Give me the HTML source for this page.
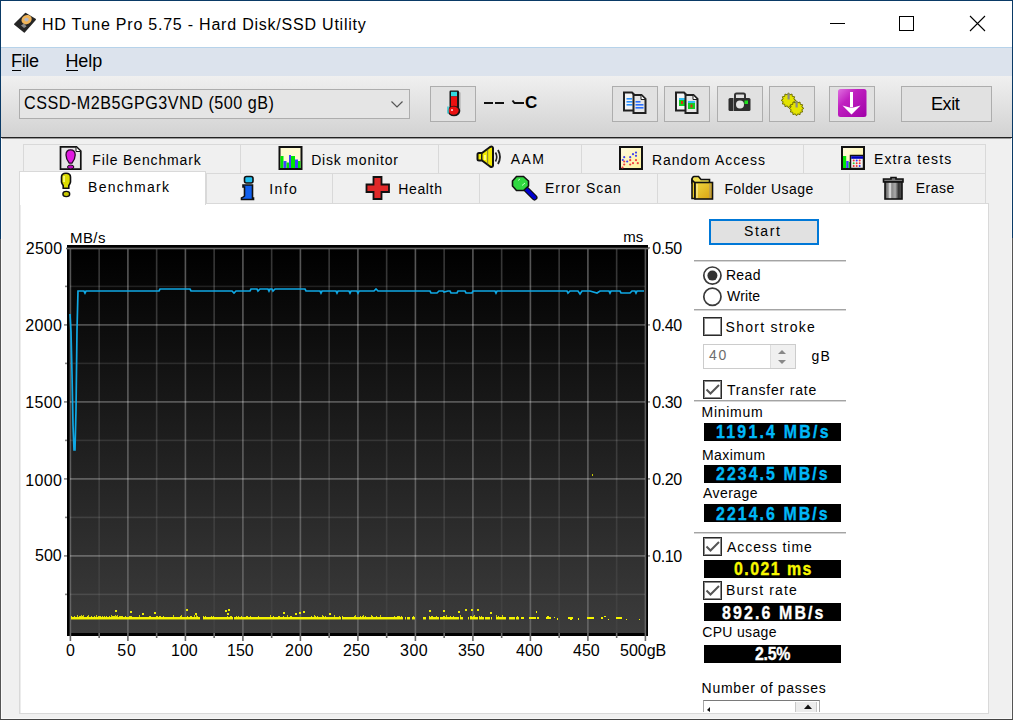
<!DOCTYPE html>
<html><head><meta charset="utf-8">
<style>
*{margin:0;padding:0;box-sizing:border-box}
html,body{width:1013px;height:720px;overflow:hidden;background:#f0f0f0;font-family:"Liberation Sans",sans-serif;color:#000}
.a{position:absolute}
.t{position:absolute;white-space:nowrap;line-height:1}
#titlebar{left:0;top:0;width:1013px;height:47px;background:#fff}
#menubar{left:0;top:47px;width:1013px;height:29px;background:#dce3ed;border-top:1px solid #b7d3ea}
#toolbar{left:0;top:76px;width:1013px;height:61px;background:linear-gradient(#f0f0f0,#d2d2d2)}
#tbline{left:0;top:137px;width:1012px;height:2px;background:linear-gradient(#222 50%,#9a9a9a 50%)}
.btn{position:absolute;background:#e1e1e1;border:1px solid #adadad}
.tab{position:absolute;background:#f0f0f0;border:1px solid #d9d9d9;border-bottom:none}
.tabsel{position:absolute;background:#fff;border:1px solid #d9d9d9;border-bottom:none}
#panel{left:19px;top:203px;width:970px;height:511px;background:#fff;border:1px solid #d9d9d9;box-shadow:inset 1px 0 0 #ececec}
.sep{position:absolute;height:2px;background:linear-gradient(#a4a4a4 50%,#d6d6d6 50%);left:694px;width:152px}
.val{position:absolute;background:#000;left:704px;width:137px;height:18px}
.chk{position:absolute;width:19px;height:19px;border:1px solid #2a2a2a;box-shadow:inset 0 0 0 1px rgba(0,0,0,0.45);background:#fff}
</style></head>
<body>
<div class="a" id="titlebar"></div>
<div class="a" id="menubar"></div>
<div class="a" id="toolbar"></div>
<div class="a" id="tbline"></div>
<!-- window border -->
<div class="a" style="left:0;top:0;width:1013px;height:1px;background:#0a3a66"></div>
<div class="a" style="left:0;top:0;width:1px;height:239px;background:#0a3a66"></div>
<div class="a" style="left:0;top:239px;width:1px;height:481px;background:#555"></div>
<div class="a" style="left:1012px;top:0;width:1px;height:238px;background:#0a3a66"></div>
<div class="a" style="left:1012px;top:238px;width:1px;height:482px;background:#555"></div>
<div class="a" style="left:0;top:719px;width:1013px;height:1px;background:#444"></div>
<div class="a" style="left:1px;top:138px;width:1px;height:581px;background:#fafafa"></div>
<div class="a" style="left:1011px;top:138px;width:1px;height:581px;background:#f8f8f8"></div>
<div class="a" style="left:1px;top:718px;width:1011px;height:1px;background:#f8f8f8"></div>

<!-- title -->
<div class="t" id="ttl" style="left:42.0px;top:17.2px;font-size:16px;letter-spacing:0.78px">HD Tune Pro 5.75 - Hard Disk/SSD Utility</div>
<!-- menu -->
<div class="t" id="mfile" style="left:11.0px;top:52.2px;font-size:18px;letter-spacing:-0.34px">File</div>
<div class="t" id="mhelp" style="left:65.4px;top:52.4px;font-size:18px;letter-spacing:-0.07px">Help</div>

<!-- toolbar -->
<div class="btn" style="left:19px;top:89px;width:391px;height:30px;background:#e5e5e5"></div>
<div class="t" id="combo" style="left:23.8px;top:93.3px;font-size:19px;transform:scaleX(0.85);transform-origin:0 0;letter-spacing:0.59px">CSSD-M2B5GPG3VND (500 gB)</div>
<div class="btn" style="left:430px;top:86px;width:46px;height:36px"></div>
<div class="t" id="tempc" style="left:525px;top:94.0px;font-size:17px;font-weight:bold">C</div>
<div class="a" style="left:484px;top:102px;width:9px;height:2px;background:#111"></div>
<div class="a" style="left:495px;top:102px;width:9px;height:2px;background:#111"></div>
<svg class="a" style="left:510px;top:98px" width="16" height="8"><path d="M2.5,2.5 L4.5,5 H14" fill="none" stroke="#111" stroke-width="2"/></svg>
<div class="btn" style="left:612px;top:86px;width:46px;height:36px"></div>
<div class="btn" style="left:664px;top:86px;width:46px;height:36px"></div>
<div class="btn" style="left:717px;top:86px;width:46px;height:36px"></div>
<div class="btn" style="left:769px;top:86px;width:46px;height:36px"></div>
<div class="btn" style="left:829px;top:86px;width:46px;height:36px"></div>
<div class="btn" style="left:901px;top:86px;width:91px;height:36px"></div>
<div class="t" id="exit" style="left:930.9px;top:94.7px;font-size:18px;letter-spacing:-0.37px">Exit</div>


<!-- tabs back row -->
<div class="tab" style="left:23px;top:144px;width:218px;height:30px"></div>
<div class="tab" style="left:240px;top:144px;width:199px;height:30px"></div>
<div class="tab" style="left:438px;top:144px;width:144px;height:30px"></div>
<div class="tab" style="left:581px;top:144px;width:223px;height:30px"></div>
<div class="tab" style="left:803px;top:144px;width:183px;height:30px"></div>
<div class="t" id="tb_fb" style="left:92.3px;top:152.9px;font-size:14px;letter-spacing:0.86px">File Benchmark</div>
<div class="t" id="tb_dm" style="left:311.2px;top:152.8px;font-size:14px;letter-spacing:0.81px">Disk monitor</div>
<div class="t" id="tb_aam" style="left:510.8px;top:152px;font-size:14px;letter-spacing:1.35px">AAM</div>
<div class="t" id="tb_ra" style="left:651.9px;top:152.9px;font-size:14px;letter-spacing:1.0px">Random Access</div>
<div class="t" id="tb_et" style="left:874.0px;top:152px;font-size:14px;letter-spacing:1.1px">Extra tests</div>
<!-- tabs front row -->
<div class="tab" style="left:206px;top:173px;width:127px;height:31px"></div>
<div class="tab" style="left:332px;top:173px;width:148px;height:31px"></div>
<div class="tab" style="left:479px;top:173px;width:179px;height:31px"></div>
<div class="tab" style="left:657px;top:173px;width:193px;height:31px"></div>
<div class="tab" style="left:849px;top:173px;width:137px;height:31px"></div>
<div class="t" id="tb_in" style="left:269.2px;top:182.4px;font-size:14px;letter-spacing:1.44px">Info</div>
<div class="t" id="tb_he" style="left:398.2px;top:182.4px;font-size:14px;letter-spacing:0.66px">Health</div>
<div class="t" id="tb_es" style="left:545.0px;top:181.4px;font-size:14px;letter-spacing:1.0px">Error Scan</div>
<div class="t" id="tb_fu" style="left:724.4px;top:182.4px;font-size:14px;letter-spacing:0.43px">Folder Usage</div>
<div class="t" id="tb_er" style="left:915.8px;top:181.4px;font-size:14px;letter-spacing:0.48px">Erase</div>
<!-- panel -->
<div class="a" id="panel"></div>

<div class="tabsel" style="left:19px;top:171px;width:187px;height:34px"></div>
<div class="t" id="tb_bm" style="left:88.1px;top:179.6px;font-size:14px;letter-spacing:1.25px">Benchmark</div>
<svg class="a" style="left:60px;top:236px" width="600" height="410" viewBox="0 0 600 410" shape-rendering="crispEdges">
<defs><linearGradient id="bg" x1="0" y1="0" x2="0" y2="1"><stop offset="0" stop-color="#000"/><stop offset="1" stop-color="#3c3c3c"/></linearGradient><linearGradient id="gmaj" x1="0" y1="0" x2="0" y2="1"><stop offset="0" stop-color="#555"/><stop offset="1" stop-color="#656565"/></linearGradient><linearGradient id="gmin" x1="0" y1="0" x2="0" y2="1"><stop offset="0" stop-color="#363636"/><stop offset="1" stop-color="#424242"/></linearGradient></defs>
<rect x="7" y="9" width="581" height="391" fill="#000"/>
<rect x="10" y="12" width="575" height="385" fill="url(#bg)"/>
<rect x="9.6" y="12" width="1.6" height="385" fill="url(#gmaj)" shape-rendering="auto"/>
<rect x="9.6" y="397" width="1.6" height="8" fill="#6a6a6a" shape-rendering="auto"/>
<rect x="38.35" y="12" width="1.6" height="385" fill="url(#gmin)" shape-rendering="auto"/>
<rect x="38.35" y="397" width="1.6" height="5" fill="#6a6a6a" shape-rendering="auto"/>
<rect x="67.1" y="12" width="1.6" height="385" fill="url(#gmaj)" shape-rendering="auto"/>
<rect x="67.1" y="397" width="1.6" height="8" fill="#6a6a6a" shape-rendering="auto"/>
<rect x="95.85" y="12" width="1.6" height="385" fill="url(#gmin)" shape-rendering="auto"/>
<rect x="95.85" y="397" width="1.6" height="5" fill="#6a6a6a" shape-rendering="auto"/>
<rect x="124.6" y="12" width="1.6" height="385" fill="url(#gmaj)" shape-rendering="auto"/>
<rect x="124.6" y="397" width="1.6" height="8" fill="#6a6a6a" shape-rendering="auto"/>
<rect x="153.35" y="12" width="1.6" height="385" fill="url(#gmin)" shape-rendering="auto"/>
<rect x="153.35" y="397" width="1.6" height="5" fill="#6a6a6a" shape-rendering="auto"/>
<rect x="182.1" y="12" width="1.6" height="385" fill="url(#gmaj)" shape-rendering="auto"/>
<rect x="182.1" y="397" width="1.6" height="8" fill="#6a6a6a" shape-rendering="auto"/>
<rect x="210.85" y="12" width="1.6" height="385" fill="url(#gmin)" shape-rendering="auto"/>
<rect x="210.85" y="397" width="1.6" height="5" fill="#6a6a6a" shape-rendering="auto"/>
<rect x="239.6" y="12" width="1.6" height="385" fill="url(#gmaj)" shape-rendering="auto"/>
<rect x="239.6" y="397" width="1.6" height="8" fill="#6a6a6a" shape-rendering="auto"/>
<rect x="268.35" y="12" width="1.6" height="385" fill="url(#gmin)" shape-rendering="auto"/>
<rect x="268.35" y="397" width="1.6" height="5" fill="#6a6a6a" shape-rendering="auto"/>
<rect x="297.1" y="12" width="1.6" height="385" fill="url(#gmaj)" shape-rendering="auto"/>
<rect x="297.1" y="397" width="1.6" height="8" fill="#6a6a6a" shape-rendering="auto"/>
<rect x="325.85" y="12" width="1.6" height="385" fill="url(#gmin)" shape-rendering="auto"/>
<rect x="325.85" y="397" width="1.6" height="5" fill="#6a6a6a" shape-rendering="auto"/>
<rect x="354.6" y="12" width="1.6" height="385" fill="url(#gmaj)" shape-rendering="auto"/>
<rect x="354.6" y="397" width="1.6" height="8" fill="#6a6a6a" shape-rendering="auto"/>
<rect x="383.35" y="12" width="1.6" height="385" fill="url(#gmin)" shape-rendering="auto"/>
<rect x="383.35" y="397" width="1.6" height="5" fill="#6a6a6a" shape-rendering="auto"/>
<rect x="412.1" y="12" width="1.6" height="385" fill="url(#gmaj)" shape-rendering="auto"/>
<rect x="412.1" y="397" width="1.6" height="8" fill="#6a6a6a" shape-rendering="auto"/>
<rect x="440.85" y="12" width="1.6" height="385" fill="url(#gmin)" shape-rendering="auto"/>
<rect x="440.85" y="397" width="1.6" height="5" fill="#6a6a6a" shape-rendering="auto"/>
<rect x="469.6" y="12" width="1.6" height="385" fill="url(#gmaj)" shape-rendering="auto"/>
<rect x="469.6" y="397" width="1.6" height="8" fill="#6a6a6a" shape-rendering="auto"/>
<rect x="498.35" y="12" width="1.6" height="385" fill="url(#gmin)" shape-rendering="auto"/>
<rect x="498.35" y="397" width="1.6" height="5" fill="#6a6a6a" shape-rendering="auto"/>
<rect x="527.1" y="12" width="1.6" height="385" fill="url(#gmaj)" shape-rendering="auto"/>
<rect x="527.1" y="397" width="1.6" height="8" fill="#6a6a6a" shape-rendering="auto"/>
<rect x="555.85" y="12" width="1.6" height="385" fill="url(#gmin)" shape-rendering="auto"/>
<rect x="555.85" y="397" width="1.6" height="5" fill="#6a6a6a" shape-rendering="auto"/>
<rect x="584.6" y="12" width="1.6" height="385" fill="url(#gmaj)" shape-rendering="auto"/>
<rect x="584.6" y="397" width="1.6" height="8" fill="#6a6a6a" shape-rendering="auto"/>
<rect x="6" y="11.7" width="583" height="1.6" fill="#6a6a6a" shape-rendering="auto"/>
<rect x="588" y="11.1" width="2" height="1.6" fill="#888" shape-rendering="auto"/>
<rect x="10" y="49.6" width="575" height="1.6" fill="#fff" opacity="0.11" shape-rendering="auto"/>
<rect x="5" y="49.6" width="2" height="1.6" fill="#888" shape-rendering="auto"/>
<rect x="10" y="88.1" width="575" height="1.6" fill="#fff" opacity="0.3" shape-rendering="auto"/>
<rect x="4" y="88.1" width="3" height="1.6" fill="#888" shape-rendering="auto"/>
<rect x="588" y="88.1" width="2" height="1.6" fill="#888" shape-rendering="auto"/>
<rect x="10" y="126.6" width="575" height="1.6" fill="#fff" opacity="0.11" shape-rendering="auto"/>
<rect x="5" y="126.6" width="2" height="1.6" fill="#888" shape-rendering="auto"/>
<rect x="10" y="165.1" width="575" height="1.6" fill="#fff" opacity="0.3" shape-rendering="auto"/>
<rect x="4" y="165.1" width="3" height="1.6" fill="#888" shape-rendering="auto"/>
<rect x="588" y="165.1" width="2" height="1.6" fill="#888" shape-rendering="auto"/>
<rect x="10" y="203.6" width="575" height="1.6" fill="#fff" opacity="0.11" shape-rendering="auto"/>
<rect x="5" y="203.6" width="2" height="1.6" fill="#888" shape-rendering="auto"/>
<rect x="10" y="242.1" width="575" height="1.6" fill="#fff" opacity="0.3" shape-rendering="auto"/>
<rect x="4" y="242.1" width="3" height="1.6" fill="#888" shape-rendering="auto"/>
<rect x="588" y="242.1" width="2" height="1.6" fill="#888" shape-rendering="auto"/>
<rect x="10" y="280.6" width="575" height="1.6" fill="#fff" opacity="0.11" shape-rendering="auto"/>
<rect x="5" y="280.6" width="2" height="1.6" fill="#888" shape-rendering="auto"/>
<rect x="10" y="319.1" width="575" height="1.6" fill="#fff" opacity="0.3" shape-rendering="auto"/>
<rect x="4" y="319.1" width="3" height="1.6" fill="#888" shape-rendering="auto"/>
<rect x="588" y="319.1" width="2" height="1.6" fill="#888" shape-rendering="auto"/>
<rect x="10" y="357.6" width="575" height="1.6" fill="#fff" opacity="0.11" shape-rendering="auto"/>
<rect x="5" y="357.6" width="2" height="1.6" fill="#888" shape-rendering="auto"/>
<path d="M10,78 L11,96 L12,138 L13,189 L14,214 L15,214 L16,174 L17,94 L18,55 L24,55 L25,57 L26,55 L99,55 L100,53 L130,53 L131,55 L172,55 L174,57 L176,55 L190,55 L191,53 L197,53 L198,55 L200,53 L208,53 L209,55 L210,53 L212,53 L213,55 L215,53 L245,53 L246,55 L260,55 L261,57 L262,55 L276,55 L277,57 L278,55 L289,55 L290,57 L291,55 L297,55 L298,57 L299,55 L314,55 L316,53 L318,55 L370,55 L371,57 L377,57 L379,55 L383,55 L384,56 L388,55 L390,55 L391,57 L397,57 L398,55 L405,55 L406,57 L412,57 L413,55 L435,55 L436,57 L437,55 L507,55 L508,57 L510,55 L518,55 L520,58 L522,55 L530,55 L537,57 L540,55 L549,55 L550,57 L551,55 L560,55 L561,57 L570,57 L572,55 L575,55 L576,57 L577,55 L584,55" fill="none" stroke="#10a8e4" stroke-width="1.7" shape-rendering="auto" stroke-linejoin="miter"/>
<rect x="11" y="381" width="1" height="2" fill="#f4f400" opacity="1"/>
<rect x="11" y="383" width="1" height="1" fill="#f4f400" opacity="0.45"/>
<rect x="11" y="380" width="1" height="1" fill="#f4f400" opacity="0.9"/>
<rect x="12" y="381" width="1" height="2" fill="#f4f400" opacity="1"/>
<rect x="12" y="383" width="1" height="1" fill="#f4f400" opacity="0.45"/>
<rect x="13" y="381" width="1" height="2" fill="#f4f400" opacity="1"/>
<rect x="13" y="383" width="1" height="1" fill="#f4f400" opacity="0.45"/>
<rect x="14" y="381" width="1" height="2" fill="#f4f400" opacity="1"/>
<rect x="14" y="383" width="1" height="1" fill="#f4f400" opacity="0.45"/>
<rect x="14" y="380" width="1" height="1" fill="#f4f400" opacity="0.9"/>
<rect x="15" y="381" width="1" height="2" fill="#f4f400" opacity="1"/>
<rect x="15" y="383" width="1" height="1" fill="#f4f400" opacity="0.45"/>
<rect x="16" y="381" width="1" height="2" fill="#f4f400" opacity="1"/>
<rect x="16" y="383" width="1" height="1" fill="#f4f400" opacity="0.45"/>
<rect x="17" y="381" width="1" height="2" fill="#f4f400" opacity="1"/>
<rect x="17" y="383" width="1" height="1" fill="#f4f400" opacity="0.45"/>
<rect x="17" y="379" width="1" height="2" fill="#f4f400" opacity="0.8"/>
<rect x="18" y="381" width="1" height="2" fill="#f4f400" opacity="1"/>
<rect x="18" y="383" width="1" height="1" fill="#f4f400" opacity="0.45"/>
<rect x="19" y="381" width="1" height="2" fill="#f4f400" opacity="1"/>
<rect x="19" y="383" width="1" height="1" fill="#f4f400" opacity="0.45"/>
<rect x="19" y="380" width="1" height="1" fill="#f4f400" opacity="0.9"/>
<rect x="20" y="381" width="1" height="2" fill="#f4f400" opacity="1"/>
<rect x="20" y="383" width="1" height="1" fill="#f4f400" opacity="0.45"/>
<rect x="20" y="380" width="1" height="1" fill="#f4f400" opacity="0.9"/>
<rect x="21" y="381" width="1" height="2" fill="#f4f400" opacity="1"/>
<rect x="21" y="383" width="1" height="1" fill="#f4f400" opacity="0.45"/>
<rect x="21" y="379" width="1" height="2" fill="#f4f400" opacity="0.8"/>
<rect x="22" y="381" width="1" height="2" fill="#f4f400" opacity="1"/>
<rect x="22" y="383" width="1" height="1" fill="#f4f400" opacity="0.45"/>
<rect x="22" y="380" width="1" height="1" fill="#f4f400" opacity="0.9"/>
<rect x="23" y="381" width="1" height="2" fill="#f4f400" opacity="1"/>
<rect x="23" y="383" width="1" height="1" fill="#f4f400" opacity="0.45"/>
<rect x="23" y="379" width="1" height="2" fill="#f4f400" opacity="0.8"/>
<rect x="24" y="381" width="1" height="2" fill="#f4f400" opacity="1"/>
<rect x="24" y="383" width="1" height="1" fill="#f4f400" opacity="0.45"/>
<rect x="25" y="381" width="1" height="2" fill="#f4f400" opacity="1"/>
<rect x="25" y="383" width="1" height="1" fill="#f4f400" opacity="0.45"/>
<rect x="26" y="381" width="1" height="2" fill="#f4f400" opacity="1"/>
<rect x="26" y="383" width="1" height="1" fill="#f4f400" opacity="0.45"/>
<rect x="27" y="381" width="1" height="2" fill="#f4f400" opacity="1"/>
<rect x="27" y="383" width="1" height="1" fill="#f4f400" opacity="0.45"/>
<rect x="27" y="380" width="1" height="1" fill="#f4f400" opacity="0.9"/>
<rect x="28" y="381" width="1" height="2" fill="#f4f400" opacity="1"/>
<rect x="28" y="383" width="1" height="1" fill="#f4f400" opacity="0.45"/>
<rect x="28" y="379" width="1" height="2" fill="#f4f400" opacity="0.8"/>
<rect x="29" y="381" width="1" height="2" fill="#f4f400" opacity="1"/>
<rect x="29" y="383" width="1" height="1" fill="#f4f400" opacity="0.45"/>
<rect x="30" y="381" width="1" height="2" fill="#f4f400" opacity="1"/>
<rect x="30" y="383" width="1" height="1" fill="#f4f400" opacity="0.45"/>
<rect x="31" y="381" width="1" height="2" fill="#f4f400" opacity="1"/>
<rect x="31" y="383" width="1" height="1" fill="#f4f400" opacity="0.45"/>
<rect x="31" y="380" width="1" height="1" fill="#f4f400" opacity="0.9"/>
<rect x="32" y="381" width="1" height="2" fill="#f4f400" opacity="1"/>
<rect x="32" y="383" width="1" height="1" fill="#f4f400" opacity="0.45"/>
<rect x="33" y="381" width="1" height="2" fill="#f4f400" opacity="1"/>
<rect x="33" y="383" width="1" height="1" fill="#f4f400" opacity="0.45"/>
<rect x="34" y="381" width="1" height="2" fill="#f4f400" opacity="1"/>
<rect x="34" y="383" width="1" height="1" fill="#f4f400" opacity="0.45"/>
<rect x="34" y="380" width="1" height="1" fill="#f4f400" opacity="0.9"/>
<rect x="35" y="381" width="1" height="2" fill="#f4f400" opacity="1"/>
<rect x="35" y="383" width="1" height="1" fill="#f4f400" opacity="0.45"/>
<rect x="36" y="381" width="1" height="2" fill="#f4f400" opacity="1"/>
<rect x="36" y="383" width="1" height="1" fill="#f4f400" opacity="0.45"/>
<rect x="36" y="379" width="1" height="2" fill="#f4f400" opacity="0.8"/>
<rect x="37" y="381" width="1" height="2" fill="#f4f400" opacity="1"/>
<rect x="37" y="383" width="1" height="1" fill="#f4f400" opacity="0.45"/>
<rect x="38" y="381" width="1" height="2" fill="#f4f400" opacity="1"/>
<rect x="38" y="383" width="1" height="1" fill="#f4f400" opacity="0.45"/>
<rect x="38" y="380" width="1" height="1" fill="#f4f400" opacity="0.9"/>
<rect x="39" y="381" width="1" height="2" fill="#f4f400" opacity="1"/>
<rect x="39" y="383" width="1" height="1" fill="#f4f400" opacity="0.45"/>
<rect x="39" y="380" width="1" height="1" fill="#f4f400" opacity="0.9"/>
<rect x="40" y="381" width="1" height="2" fill="#f4f400" opacity="1"/>
<rect x="40" y="383" width="1" height="1" fill="#f4f400" opacity="0.45"/>
<rect x="40" y="380" width="1" height="1" fill="#f4f400" opacity="0.9"/>
<rect x="41" y="381" width="1" height="2" fill="#f4f400" opacity="1"/>
<rect x="41" y="383" width="1" height="1" fill="#f4f400" opacity="0.45"/>
<rect x="42" y="381" width="1" height="2" fill="#f4f400" opacity="1"/>
<rect x="42" y="383" width="1" height="1" fill="#f4f400" opacity="0.45"/>
<rect x="42" y="380" width="1" height="1" fill="#f4f400" opacity="0.9"/>
<rect x="43" y="381" width="1" height="2" fill="#f4f400" opacity="1"/>
<rect x="43" y="383" width="1" height="1" fill="#f4f400" opacity="0.45"/>
<rect x="44" y="381" width="1" height="2" fill="#f4f400" opacity="1"/>
<rect x="44" y="383" width="1" height="1" fill="#f4f400" opacity="0.45"/>
<rect x="44" y="380" width="1" height="1" fill="#f4f400" opacity="0.9"/>
<rect x="45" y="381" width="1" height="2" fill="#f4f400" opacity="1"/>
<rect x="45" y="383" width="1" height="1" fill="#f4f400" opacity="0.45"/>
<rect x="46" y="381" width="1" height="2" fill="#f4f400" opacity="1"/>
<rect x="46" y="383" width="1" height="1" fill="#f4f400" opacity="0.45"/>
<rect x="46" y="380" width="1" height="1" fill="#f4f400" opacity="0.9"/>
<rect x="47" y="381" width="1" height="2" fill="#f4f400" opacity="1"/>
<rect x="47" y="383" width="1" height="1" fill="#f4f400" opacity="0.45"/>
<rect x="48" y="381" width="1" height="2" fill="#f4f400" opacity="1"/>
<rect x="48" y="383" width="1" height="1" fill="#f4f400" opacity="0.45"/>
<rect x="49" y="381" width="1" height="2" fill="#f4f400" opacity="1"/>
<rect x="49" y="383" width="1" height="1" fill="#f4f400" opacity="0.45"/>
<rect x="49" y="380" width="1" height="1" fill="#f4f400" opacity="0.9"/>
<rect x="50" y="381" width="1" height="2" fill="#f4f400" opacity="1"/>
<rect x="50" y="383" width="1" height="1" fill="#f4f400" opacity="0.45"/>
<rect x="51" y="381" width="1" height="2" fill="#f4f400" opacity="1"/>
<rect x="51" y="383" width="1" height="1" fill="#f4f400" opacity="0.45"/>
<rect x="51" y="379" width="1" height="2" fill="#f4f400" opacity="0.8"/>
<rect x="52" y="381" width="1" height="2" fill="#f4f400" opacity="1"/>
<rect x="52" y="383" width="1" height="1" fill="#f4f400" opacity="0.45"/>
<rect x="52" y="380" width="1" height="1" fill="#f4f400" opacity="0.9"/>
<rect x="53" y="381" width="1" height="2" fill="#f4f400" opacity="1"/>
<rect x="53" y="383" width="1" height="1" fill="#f4f400" opacity="0.45"/>
<rect x="53" y="380" width="1" height="1" fill="#f4f400" opacity="0.9"/>
<rect x="54" y="381" width="1" height="2" fill="#f4f400" opacity="1"/>
<rect x="54" y="383" width="1" height="1" fill="#f4f400" opacity="0.45"/>
<rect x="54" y="380" width="1" height="1" fill="#f4f400" opacity="0.9"/>
<rect x="55" y="381" width="1" height="2" fill="#f4f400" opacity="1"/>
<rect x="55" y="383" width="1" height="1" fill="#f4f400" opacity="0.45"/>
<rect x="55" y="379" width="1" height="2" fill="#f4f400" opacity="0.8"/>
<rect x="55" y="374" width="1.6" height="1.6" fill="#f4f400" opacity="0.95"/>
<rect x="56" y="381" width="1" height="2" fill="#f4f400" opacity="1"/>
<rect x="56" y="383" width="1" height="1" fill="#f4f400" opacity="0.45"/>
<rect x="56" y="380" width="1" height="1" fill="#f4f400" opacity="0.9"/>
<rect x="57" y="381" width="1" height="2" fill="#f4f400" opacity="1"/>
<rect x="57" y="383" width="1" height="1" fill="#f4f400" opacity="0.45"/>
<rect x="57" y="379" width="1" height="2" fill="#f4f400" opacity="0.8"/>
<rect x="58" y="381" width="1" height="2" fill="#f4f400" opacity="1"/>
<rect x="58" y="383" width="1" height="1" fill="#f4f400" opacity="0.45"/>
<rect x="59" y="381" width="1" height="2" fill="#f4f400" opacity="1"/>
<rect x="59" y="383" width="1" height="1" fill="#f4f400" opacity="0.45"/>
<rect x="59" y="380" width="1" height="1" fill="#f4f400" opacity="0.9"/>
<rect x="60" y="381" width="1" height="2" fill="#f4f400" opacity="1"/>
<rect x="60" y="383" width="1" height="1" fill="#f4f400" opacity="0.45"/>
<rect x="60" y="380" width="1" height="1" fill="#f4f400" opacity="0.9"/>
<rect x="61" y="381" width="1" height="2" fill="#f4f400" opacity="1"/>
<rect x="61" y="383" width="1" height="1" fill="#f4f400" opacity="0.45"/>
<rect x="61" y="380" width="1" height="1" fill="#f4f400" opacity="0.9"/>
<rect x="62" y="381" width="1" height="2" fill="#f4f400" opacity="1"/>
<rect x="62" y="383" width="1" height="1" fill="#f4f400" opacity="0.45"/>
<rect x="62" y="380" width="1" height="1" fill="#f4f400" opacity="0.9"/>
<rect x="63" y="381" width="1" height="2" fill="#f4f400" opacity="1"/>
<rect x="63" y="383" width="1" height="1" fill="#f4f400" opacity="0.45"/>
<rect x="64" y="381" width="1" height="2" fill="#f4f400" opacity="1"/>
<rect x="64" y="383" width="1" height="1" fill="#f4f400" opacity="0.45"/>
<rect x="65" y="381" width="1" height="2" fill="#f4f400" opacity="1"/>
<rect x="65" y="383" width="1" height="1" fill="#f4f400" opacity="0.45"/>
<rect x="65" y="380" width="1" height="1" fill="#f4f400" opacity="0.9"/>
<rect x="66" y="381" width="1" height="2" fill="#f4f400" opacity="1"/>
<rect x="66" y="383" width="1" height="1" fill="#f4f400" opacity="0.45"/>
<rect x="67" y="381" width="1" height="2" fill="#f4f400" opacity="1"/>
<rect x="67" y="383" width="1" height="1" fill="#f4f400" opacity="0.45"/>
<rect x="68" y="381" width="1" height="2" fill="#f4f400" opacity="1"/>
<rect x="68" y="383" width="1" height="1" fill="#f4f400" opacity="0.45"/>
<rect x="69" y="381" width="1" height="2" fill="#f4f400" opacity="1"/>
<rect x="69" y="383" width="1" height="1" fill="#f4f400" opacity="0.45"/>
<rect x="69" y="380" width="1" height="1" fill="#f4f400" opacity="0.9"/>
<rect x="70" y="381" width="1" height="2" fill="#f4f400" opacity="1"/>
<rect x="70" y="383" width="1" height="1" fill="#f4f400" opacity="0.45"/>
<rect x="70" y="380" width="1" height="1" fill="#f4f400" opacity="0.9"/>
<rect x="70" y="375" width="1.6" height="1.6" fill="#f4f400" opacity="0.95"/>
<rect x="71" y="381" width="1" height="2" fill="#f4f400" opacity="1"/>
<rect x="71" y="383" width="1" height="1" fill="#f4f400" opacity="0.45"/>
<rect x="71" y="380" width="1" height="1" fill="#f4f400" opacity="0.9"/>
<rect x="72" y="381" width="1" height="2" fill="#f4f400" opacity="1"/>
<rect x="72" y="383" width="1" height="1" fill="#f4f400" opacity="0.45"/>
<rect x="73" y="381" width="1" height="2" fill="#f4f400" opacity="1"/>
<rect x="73" y="383" width="1" height="1" fill="#f4f400" opacity="0.45"/>
<rect x="74" y="381" width="1" height="2" fill="#f4f400" opacity="1"/>
<rect x="74" y="383" width="1" height="1" fill="#f4f400" opacity="0.45"/>
<rect x="75" y="381" width="1" height="2" fill="#f4f400" opacity="1"/>
<rect x="75" y="383" width="1" height="1" fill="#f4f400" opacity="0.45"/>
<rect x="76" y="381" width="1" height="2" fill="#f4f400" opacity="1"/>
<rect x="76" y="383" width="1" height="1" fill="#f4f400" opacity="0.45"/>
<rect x="77" y="381" width="1" height="2" fill="#f4f400" opacity="1"/>
<rect x="77" y="383" width="1" height="1" fill="#f4f400" opacity="0.45"/>
<rect x="78" y="381" width="1" height="2" fill="#f4f400" opacity="1"/>
<rect x="78" y="383" width="1" height="1" fill="#f4f400" opacity="0.45"/>
<rect x="79" y="381" width="1" height="2" fill="#f4f400" opacity="1"/>
<rect x="79" y="383" width="1" height="1" fill="#f4f400" opacity="0.45"/>
<rect x="79" y="379" width="1" height="2" fill="#f4f400" opacity="0.8"/>
<rect x="80" y="381" width="1" height="2" fill="#f4f400" opacity="1"/>
<rect x="80" y="383" width="1" height="1" fill="#f4f400" opacity="0.45"/>
<rect x="81" y="381" width="1" height="2" fill="#f4f400" opacity="1"/>
<rect x="81" y="383" width="1" height="1" fill="#f4f400" opacity="0.45"/>
<rect x="82" y="381" width="1" height="2" fill="#f4f400" opacity="1"/>
<rect x="82" y="383" width="1" height="1" fill="#f4f400" opacity="0.45"/>
<rect x="82" y="377" width="1.6" height="1.6" fill="#f4f400" opacity="0.95"/>
<rect x="83" y="381" width="1" height="2" fill="#f4f400" opacity="1"/>
<rect x="83" y="383" width="1" height="1" fill="#f4f400" opacity="0.45"/>
<rect x="84" y="381" width="1" height="2" fill="#f4f400" opacity="1"/>
<rect x="84" y="383" width="1" height="1" fill="#f4f400" opacity="0.45"/>
<rect x="85" y="381" width="1" height="2" fill="#f4f400" opacity="1"/>
<rect x="85" y="383" width="1" height="1" fill="#f4f400" opacity="0.45"/>
<rect x="86" y="381" width="1" height="2" fill="#f4f400" opacity="1"/>
<rect x="86" y="383" width="1" height="1" fill="#f4f400" opacity="0.45"/>
<rect x="87" y="381" width="1" height="2" fill="#f4f400" opacity="1"/>
<rect x="87" y="383" width="1" height="1" fill="#f4f400" opacity="0.45"/>
<rect x="88" y="381" width="1" height="2" fill="#f4f400" opacity="1"/>
<rect x="88" y="383" width="1" height="1" fill="#f4f400" opacity="0.45"/>
<rect x="89" y="381" width="1" height="2" fill="#f4f400" opacity="1"/>
<rect x="89" y="383" width="1" height="1" fill="#f4f400" opacity="0.45"/>
<rect x="89" y="380" width="1" height="1" fill="#f4f400" opacity="0.9"/>
<rect x="90" y="381" width="1" height="2" fill="#f4f400" opacity="1"/>
<rect x="90" y="383" width="1" height="1" fill="#f4f400" opacity="0.45"/>
<rect x="90" y="380" width="1" height="1" fill="#f4f400" opacity="0.9"/>
<rect x="91" y="381" width="1" height="2" fill="#f4f400" opacity="1"/>
<rect x="91" y="383" width="1" height="1" fill="#f4f400" opacity="0.45"/>
<rect x="92" y="381" width="1" height="2" fill="#f4f400" opacity="1"/>
<rect x="92" y="383" width="1" height="1" fill="#f4f400" opacity="0.45"/>
<rect x="93" y="381" width="1" height="2" fill="#f4f400" opacity="1"/>
<rect x="93" y="383" width="1" height="1" fill="#f4f400" opacity="0.45"/>
<rect x="94" y="381" width="1" height="2" fill="#f4f400" opacity="1"/>
<rect x="94" y="383" width="1" height="1" fill="#f4f400" opacity="0.45"/>
<rect x="94" y="376" width="1.6" height="1.6" fill="#f4f400" opacity="0.95"/>
<rect x="95" y="381" width="1" height="2" fill="#f4f400" opacity="1"/>
<rect x="95" y="383" width="1" height="1" fill="#f4f400" opacity="0.45"/>
<rect x="96" y="381" width="1" height="2" fill="#f4f400" opacity="1"/>
<rect x="96" y="383" width="1" height="1" fill="#f4f400" opacity="0.45"/>
<rect x="96" y="380" width="1" height="1" fill="#f4f400" opacity="0.9"/>
<rect x="97" y="381" width="1" height="2" fill="#f4f400" opacity="1"/>
<rect x="97" y="383" width="1" height="1" fill="#f4f400" opacity="0.45"/>
<rect x="97" y="380" width="1" height="1" fill="#f4f400" opacity="0.9"/>
<rect x="98" y="381" width="1" height="2" fill="#f4f400" opacity="1"/>
<rect x="98" y="383" width="1" height="1" fill="#f4f400" opacity="0.45"/>
<rect x="99" y="381" width="1" height="2" fill="#f4f400" opacity="1"/>
<rect x="99" y="383" width="1" height="1" fill="#f4f400" opacity="0.45"/>
<rect x="99" y="380" width="1" height="1" fill="#f4f400" opacity="0.9"/>
<rect x="100" y="381" width="1" height="2" fill="#f4f400" opacity="1"/>
<rect x="100" y="383" width="1" height="1" fill="#f4f400" opacity="0.45"/>
<rect x="100" y="380" width="1" height="1" fill="#f4f400" opacity="0.9"/>
<rect x="101" y="381" width="1" height="2" fill="#f4f400" opacity="1"/>
<rect x="101" y="383" width="1" height="1" fill="#f4f400" opacity="0.45"/>
<rect x="102" y="381" width="1" height="2" fill="#f4f400" opacity="1"/>
<rect x="102" y="383" width="1" height="1" fill="#f4f400" opacity="0.45"/>
<rect x="103" y="381" width="1" height="2" fill="#f4f400" opacity="1"/>
<rect x="103" y="383" width="1" height="1" fill="#f4f400" opacity="0.45"/>
<rect x="103" y="380" width="1" height="1" fill="#f4f400" opacity="0.9"/>
<rect x="104" y="381" width="1" height="2" fill="#f4f400" opacity="1"/>
<rect x="104" y="383" width="1" height="1" fill="#f4f400" opacity="0.45"/>
<rect x="105" y="381" width="1" height="2" fill="#f4f400" opacity="1"/>
<rect x="105" y="383" width="1" height="1" fill="#f4f400" opacity="0.45"/>
<rect x="106" y="381" width="1" height="2" fill="#f4f400" opacity="1"/>
<rect x="106" y="383" width="1" height="1" fill="#f4f400" opacity="0.45"/>
<rect x="107" y="381" width="1" height="2" fill="#f4f400" opacity="1"/>
<rect x="107" y="383" width="1" height="1" fill="#f4f400" opacity="0.45"/>
<rect x="108" y="381" width="1" height="2" fill="#f4f400" opacity="1"/>
<rect x="108" y="383" width="1" height="1" fill="#f4f400" opacity="0.45"/>
<rect x="109" y="381" width="1" height="2" fill="#f4f400" opacity="1"/>
<rect x="109" y="383" width="1" height="1" fill="#f4f400" opacity="0.45"/>
<rect x="110" y="381" width="1" height="2" fill="#f4f400" opacity="1"/>
<rect x="110" y="383" width="1" height="1" fill="#f4f400" opacity="0.45"/>
<rect x="111" y="381" width="1" height="2" fill="#f4f400" opacity="1"/>
<rect x="111" y="383" width="1" height="1" fill="#f4f400" opacity="0.45"/>
<rect x="112" y="381" width="1" height="2" fill="#f4f400" opacity="1"/>
<rect x="112" y="383" width="1" height="1" fill="#f4f400" opacity="0.45"/>
<rect x="113" y="381" width="1" height="2" fill="#f4f400" opacity="1"/>
<rect x="113" y="383" width="1" height="1" fill="#f4f400" opacity="0.45"/>
<rect x="113" y="379" width="1" height="2" fill="#f4f400" opacity="0.8"/>
<rect x="114" y="381" width="1" height="2" fill="#f4f400" opacity="1"/>
<rect x="114" y="383" width="1" height="1" fill="#f4f400" opacity="0.45"/>
<rect x="115" y="381" width="1" height="2" fill="#f4f400" opacity="1"/>
<rect x="115" y="383" width="1" height="1" fill="#f4f400" opacity="0.45"/>
<rect x="116" y="381" width="1" height="2" fill="#f4f400" opacity="1"/>
<rect x="116" y="383" width="1" height="1" fill="#f4f400" opacity="0.45"/>
<rect x="117" y="381" width="1" height="2" fill="#f4f400" opacity="1"/>
<rect x="117" y="383" width="1" height="1" fill="#f4f400" opacity="0.45"/>
<rect x="118" y="381" width="1" height="2" fill="#f4f400" opacity="1"/>
<rect x="118" y="383" width="1" height="1" fill="#f4f400" opacity="0.45"/>
<rect x="119" y="381" width="1" height="2" fill="#f4f400" opacity="1"/>
<rect x="119" y="383" width="1" height="1" fill="#f4f400" opacity="0.45"/>
<rect x="120" y="381" width="1" height="2" fill="#f4f400" opacity="1"/>
<rect x="120" y="383" width="1" height="1" fill="#f4f400" opacity="0.45"/>
<rect x="120" y="380" width="1" height="1" fill="#f4f400" opacity="0.9"/>
<rect x="121" y="381" width="1" height="2" fill="#f4f400" opacity="1"/>
<rect x="121" y="383" width="1" height="1" fill="#f4f400" opacity="0.45"/>
<rect x="121" y="379" width="1" height="2" fill="#f4f400" opacity="0.8"/>
<rect x="122" y="381" width="1" height="2" fill="#f4f400" opacity="1"/>
<rect x="122" y="383" width="1" height="1" fill="#f4f400" opacity="0.45"/>
<rect x="123" y="381" width="1" height="2" fill="#f4f400" opacity="1"/>
<rect x="123" y="383" width="1" height="1" fill="#f4f400" opacity="0.45"/>
<rect x="124" y="381" width="1" height="2" fill="#f4f400" opacity="1"/>
<rect x="124" y="383" width="1" height="1" fill="#f4f400" opacity="0.45"/>
<rect x="125" y="381" width="1" height="2" fill="#f4f400" opacity="1"/>
<rect x="125" y="383" width="1" height="1" fill="#f4f400" opacity="0.45"/>
<rect x="126" y="381" width="1" height="2" fill="#f4f400" opacity="1"/>
<rect x="126" y="383" width="1" height="1" fill="#f4f400" opacity="0.45"/>
<rect x="126" y="373" width="1.6" height="1.6" fill="#f4f400" opacity="0.95"/>
<rect x="127" y="381" width="1" height="2" fill="#f4f400" opacity="1"/>
<rect x="127" y="383" width="1" height="1" fill="#f4f400" opacity="0.45"/>
<rect x="127" y="380" width="1" height="1" fill="#f4f400" opacity="0.9"/>
<rect x="128" y="381" width="1" height="2" fill="#f4f400" opacity="1"/>
<rect x="128" y="383" width="1" height="1" fill="#f4f400" opacity="0.45"/>
<rect x="129" y="381" width="1" height="2" fill="#f4f400" opacity="1"/>
<rect x="129" y="383" width="1" height="1" fill="#f4f400" opacity="0.45"/>
<rect x="130" y="381" width="1" height="2" fill="#f4f400" opacity="1"/>
<rect x="130" y="383" width="1" height="1" fill="#f4f400" opacity="0.45"/>
<rect x="130" y="380" width="1" height="1" fill="#f4f400" opacity="0.9"/>
<rect x="131" y="381" width="1" height="2" fill="#f4f400" opacity="1"/>
<rect x="131" y="383" width="1" height="1" fill="#f4f400" opacity="0.45"/>
<rect x="131" y="380" width="1" height="1" fill="#f4f400" opacity="0.9"/>
<rect x="132" y="381" width="1" height="2" fill="#f4f400" opacity="1"/>
<rect x="132" y="383" width="1" height="1" fill="#f4f400" opacity="0.45"/>
<rect x="133" y="381" width="1" height="2" fill="#f4f400" opacity="1"/>
<rect x="133" y="383" width="1" height="1" fill="#f4f400" opacity="0.45"/>
<rect x="134" y="381" width="1" height="2" fill="#f4f400" opacity="1"/>
<rect x="134" y="383" width="1" height="1" fill="#f4f400" opacity="0.45"/>
<rect x="134" y="379" width="1" height="2" fill="#f4f400" opacity="0.8"/>
<rect x="135" y="381" width="1" height="2" fill="#f4f400" opacity="1"/>
<rect x="135" y="383" width="1" height="1" fill="#f4f400" opacity="0.45"/>
<rect x="135" y="377" width="1.6" height="1.6" fill="#f4f400" opacity="0.95"/>
<rect x="136" y="381" width="1" height="2" fill="#f4f400" opacity="1"/>
<rect x="136" y="383" width="1" height="1" fill="#f4f400" opacity="0.45"/>
<rect x="136" y="379" width="1" height="2" fill="#f4f400" opacity="0.8"/>
<rect x="137" y="381" width="1" height="2" fill="#f4f400" opacity="1"/>
<rect x="137" y="383" width="1" height="1" fill="#f4f400" opacity="0.45"/>
<rect x="137" y="380" width="1" height="1" fill="#f4f400" opacity="0.9"/>
<rect x="138" y="381" width="1" height="2" fill="#f4f400" opacity="1"/>
<rect x="138" y="383" width="1" height="1" fill="#f4f400" opacity="0.45"/>
<rect x="139" y="381" width="1" height="2" fill="#f4f400" opacity="1"/>
<rect x="139" y="383" width="1" height="1" fill="#f4f400" opacity="0.45"/>
<rect x="143" y="381" width="1" height="2" fill="#f4f400" opacity="1"/>
<rect x="143" y="383" width="1" height="1" fill="#f4f400" opacity="0.45"/>
<rect x="143" y="380" width="1" height="1" fill="#f4f400" opacity="0.9"/>
<rect x="144" y="381" width="1" height="2" fill="#f4f400" opacity="1"/>
<rect x="144" y="383" width="1" height="1" fill="#f4f400" opacity="0.45"/>
<rect x="145" y="381" width="1" height="2" fill="#f4f400" opacity="1"/>
<rect x="145" y="383" width="1" height="1" fill="#f4f400" opacity="0.45"/>
<rect x="145" y="380" width="1" height="1" fill="#f4f400" opacity="0.9"/>
<rect x="146" y="381" width="1" height="2" fill="#f4f400" opacity="1"/>
<rect x="146" y="383" width="1" height="1" fill="#f4f400" opacity="0.45"/>
<rect x="147" y="381" width="1" height="2" fill="#f4f400" opacity="1"/>
<rect x="147" y="383" width="1" height="1" fill="#f4f400" opacity="0.45"/>
<rect x="148" y="381" width="1" height="2" fill="#f4f400" opacity="1"/>
<rect x="148" y="383" width="1" height="1" fill="#f4f400" opacity="0.45"/>
<rect x="149" y="381" width="1" height="2" fill="#f4f400" opacity="1"/>
<rect x="149" y="383" width="1" height="1" fill="#f4f400" opacity="0.45"/>
<rect x="150" y="381" width="1" height="2" fill="#f4f400" opacity="1"/>
<rect x="150" y="383" width="1" height="1" fill="#f4f400" opacity="0.45"/>
<rect x="151" y="381" width="1" height="2" fill="#f4f400" opacity="1"/>
<rect x="151" y="383" width="1" height="1" fill="#f4f400" opacity="0.45"/>
<rect x="151" y="380" width="1" height="1" fill="#f4f400" opacity="0.9"/>
<rect x="152" y="381" width="1" height="2" fill="#f4f400" opacity="1"/>
<rect x="152" y="383" width="1" height="1" fill="#f4f400" opacity="0.45"/>
<rect x="153" y="381" width="1" height="2" fill="#f4f400" opacity="1"/>
<rect x="153" y="383" width="1" height="1" fill="#f4f400" opacity="0.45"/>
<rect x="153" y="380" width="1" height="1" fill="#f4f400" opacity="0.9"/>
<rect x="154" y="381" width="1" height="2" fill="#f4f400" opacity="1"/>
<rect x="154" y="383" width="1" height="1" fill="#f4f400" opacity="0.45"/>
<rect x="155" y="381" width="1" height="2" fill="#f4f400" opacity="1"/>
<rect x="155" y="383" width="1" height="1" fill="#f4f400" opacity="0.45"/>
<rect x="156" y="381" width="1" height="2" fill="#f4f400" opacity="1"/>
<rect x="156" y="383" width="1" height="1" fill="#f4f400" opacity="0.45"/>
<rect x="157" y="381" width="1" height="2" fill="#f4f400" opacity="1"/>
<rect x="157" y="383" width="1" height="1" fill="#f4f400" opacity="0.45"/>
<rect x="158" y="381" width="1" height="2" fill="#f4f400" opacity="1"/>
<rect x="158" y="383" width="1" height="1" fill="#f4f400" opacity="0.45"/>
<rect x="159" y="381" width="1" height="2" fill="#f4f400" opacity="1"/>
<rect x="159" y="383" width="1" height="1" fill="#f4f400" opacity="0.45"/>
<rect x="160" y="381" width="1" height="2" fill="#f4f400" opacity="1"/>
<rect x="160" y="383" width="1" height="1" fill="#f4f400" opacity="0.45"/>
<rect x="161" y="381" width="1" height="2" fill="#f4f400" opacity="1"/>
<rect x="161" y="383" width="1" height="1" fill="#f4f400" opacity="0.45"/>
<rect x="162" y="381" width="1" height="2" fill="#f4f400" opacity="1"/>
<rect x="162" y="383" width="1" height="1" fill="#f4f400" opacity="0.45"/>
<rect x="163" y="381" width="1" height="2" fill="#f4f400" opacity="1"/>
<rect x="163" y="383" width="1" height="1" fill="#f4f400" opacity="0.45"/>
<rect x="164" y="381" width="1" height="2" fill="#f4f400" opacity="1"/>
<rect x="164" y="383" width="1" height="1" fill="#f4f400" opacity="0.45"/>
<rect x="165" y="381" width="1" height="2" fill="#f4f400" opacity="1"/>
<rect x="165" y="383" width="1" height="1" fill="#f4f400" opacity="0.45"/>
<rect x="165" y="374" width="1.6" height="1.6" fill="#f4f400" opacity="0.95"/>
<rect x="166" y="381" width="1" height="2" fill="#f4f400" opacity="1"/>
<rect x="166" y="383" width="1" height="1" fill="#f4f400" opacity="0.45"/>
<rect x="167" y="381" width="1" height="2" fill="#f4f400" opacity="1"/>
<rect x="167" y="383" width="1" height="1" fill="#f4f400" opacity="0.45"/>
<rect x="167" y="380" width="1" height="1" fill="#f4f400" opacity="0.9"/>
<rect x="167" y="377" width="1.6" height="1.6" fill="#f4f400" opacity="0.95"/>
<rect x="168" y="381" width="1" height="2" fill="#f4f400" opacity="1"/>
<rect x="168" y="383" width="1" height="1" fill="#f4f400" opacity="0.45"/>
<rect x="168" y="373" width="1.6" height="1.6" fill="#f4f400" opacity="0.95"/>
<rect x="169" y="381" width="1" height="2" fill="#f4f400" opacity="1"/>
<rect x="169" y="383" width="1" height="1" fill="#f4f400" opacity="0.45"/>
<rect x="170" y="381" width="1" height="2" fill="#f4f400" opacity="1"/>
<rect x="170" y="383" width="1" height="1" fill="#f4f400" opacity="0.45"/>
<rect x="170" y="380" width="1" height="1" fill="#f4f400" opacity="0.9"/>
<rect x="171" y="381" width="1" height="2" fill="#f4f400" opacity="1"/>
<rect x="171" y="383" width="1" height="1" fill="#f4f400" opacity="0.45"/>
<rect x="171" y="380" width="1" height="1" fill="#f4f400" opacity="0.9"/>
<rect x="172" y="381" width="1" height="2" fill="#f4f400" opacity="1"/>
<rect x="172" y="383" width="1" height="1" fill="#f4f400" opacity="0.45"/>
<rect x="174" y="381" width="1" height="2" fill="#f4f400" opacity="1"/>
<rect x="174" y="383" width="1" height="1" fill="#f4f400" opacity="0.45"/>
<rect x="175" y="381" width="1" height="2" fill="#f4f400" opacity="1"/>
<rect x="175" y="383" width="1" height="1" fill="#f4f400" opacity="0.45"/>
<rect x="176" y="381" width="1" height="2" fill="#f4f400" opacity="1"/>
<rect x="176" y="383" width="1" height="1" fill="#f4f400" opacity="0.45"/>
<rect x="176" y="380" width="1" height="1" fill="#f4f400" opacity="0.9"/>
<rect x="177" y="381" width="1" height="2" fill="#f4f400" opacity="1"/>
<rect x="177" y="383" width="1" height="1" fill="#f4f400" opacity="0.45"/>
<rect x="178" y="381" width="1" height="2" fill="#f4f400" opacity="1"/>
<rect x="178" y="383" width="1" height="1" fill="#f4f400" opacity="0.45"/>
<rect x="178" y="380" width="1" height="1" fill="#f4f400" opacity="0.9"/>
<rect x="179" y="381" width="1" height="2" fill="#f4f400" opacity="1"/>
<rect x="179" y="383" width="1" height="1" fill="#f4f400" opacity="0.45"/>
<rect x="180" y="381" width="1" height="2" fill="#f4f400" opacity="1"/>
<rect x="180" y="383" width="1" height="1" fill="#f4f400" opacity="0.45"/>
<rect x="181" y="381" width="1" height="2" fill="#f4f400" opacity="1"/>
<rect x="181" y="383" width="1" height="1" fill="#f4f400" opacity="0.45"/>
<rect x="181" y="380" width="1" height="1" fill="#f4f400" opacity="0.9"/>
<rect x="182" y="381" width="1" height="2" fill="#f4f400" opacity="1"/>
<rect x="182" y="383" width="1" height="1" fill="#f4f400" opacity="0.45"/>
<rect x="183" y="381" width="1" height="2" fill="#f4f400" opacity="1"/>
<rect x="183" y="383" width="1" height="1" fill="#f4f400" opacity="0.45"/>
<rect x="184" y="381" width="1" height="2" fill="#f4f400" opacity="1"/>
<rect x="184" y="383" width="1" height="1" fill="#f4f400" opacity="0.45"/>
<rect x="185" y="381" width="1" height="2" fill="#f4f400" opacity="1"/>
<rect x="185" y="383" width="1" height="1" fill="#f4f400" opacity="0.45"/>
<rect x="186" y="381" width="1" height="2" fill="#f4f400" opacity="1"/>
<rect x="186" y="383" width="1" height="1" fill="#f4f400" opacity="0.45"/>
<rect x="186" y="380" width="1" height="1" fill="#f4f400" opacity="0.9"/>
<rect x="187" y="381" width="1" height="2" fill="#f4f400" opacity="1"/>
<rect x="187" y="383" width="1" height="1" fill="#f4f400" opacity="0.45"/>
<rect x="187" y="380" width="1" height="1" fill="#f4f400" opacity="0.9"/>
<rect x="188" y="381" width="1" height="2" fill="#f4f400" opacity="1"/>
<rect x="188" y="383" width="1" height="1" fill="#f4f400" opacity="0.45"/>
<rect x="189" y="381" width="1" height="2" fill="#f4f400" opacity="1"/>
<rect x="189" y="383" width="1" height="1" fill="#f4f400" opacity="0.45"/>
<rect x="190" y="381" width="1" height="2" fill="#f4f400" opacity="1"/>
<rect x="190" y="383" width="1" height="1" fill="#f4f400" opacity="0.45"/>
<rect x="190" y="380" width="1" height="1" fill="#f4f400" opacity="0.9"/>
<rect x="191" y="381" width="1" height="2" fill="#f4f400" opacity="1"/>
<rect x="191" y="383" width="1" height="1" fill="#f4f400" opacity="0.45"/>
<rect x="192" y="381" width="1" height="2" fill="#f4f400" opacity="1"/>
<rect x="192" y="383" width="1" height="1" fill="#f4f400" opacity="0.45"/>
<rect x="193" y="381" width="1" height="2" fill="#f4f400" opacity="1"/>
<rect x="193" y="383" width="1" height="1" fill="#f4f400" opacity="0.45"/>
<rect x="194" y="381" width="1" height="2" fill="#f4f400" opacity="1"/>
<rect x="194" y="383" width="1" height="1" fill="#f4f400" opacity="0.45"/>
<rect x="195" y="381" width="1" height="2" fill="#f4f400" opacity="1"/>
<rect x="195" y="383" width="1" height="1" fill="#f4f400" opacity="0.45"/>
<rect x="196" y="381" width="1" height="2" fill="#f4f400" opacity="1"/>
<rect x="196" y="383" width="1" height="1" fill="#f4f400" opacity="0.45"/>
<rect x="197" y="381" width="1" height="2" fill="#f4f400" opacity="1"/>
<rect x="197" y="383" width="1" height="1" fill="#f4f400" opacity="0.45"/>
<rect x="198" y="381" width="1" height="2" fill="#f4f400" opacity="1"/>
<rect x="198" y="383" width="1" height="1" fill="#f4f400" opacity="0.45"/>
<rect x="198" y="380" width="1" height="1" fill="#f4f400" opacity="0.9"/>
<rect x="199" y="381" width="1" height="2" fill="#f4f400" opacity="1"/>
<rect x="199" y="383" width="1" height="1" fill="#f4f400" opacity="0.45"/>
<rect x="200" y="381" width="1" height="2" fill="#f4f400" opacity="1"/>
<rect x="200" y="383" width="1" height="1" fill="#f4f400" opacity="0.45"/>
<rect x="201" y="381" width="1" height="2" fill="#f4f400" opacity="1"/>
<rect x="201" y="383" width="1" height="1" fill="#f4f400" opacity="0.45"/>
<rect x="202" y="381" width="1" height="2" fill="#f4f400" opacity="1"/>
<rect x="202" y="383" width="1" height="1" fill="#f4f400" opacity="0.45"/>
<rect x="203" y="381" width="1" height="2" fill="#f4f400" opacity="1"/>
<rect x="203" y="383" width="1" height="1" fill="#f4f400" opacity="0.45"/>
<rect x="204" y="381" width="1" height="2" fill="#f4f400" opacity="1"/>
<rect x="204" y="383" width="1" height="1" fill="#f4f400" opacity="0.45"/>
<rect x="205" y="381" width="1" height="2" fill="#f4f400" opacity="1"/>
<rect x="205" y="383" width="1" height="1" fill="#f4f400" opacity="0.45"/>
<rect x="206" y="381" width="1" height="2" fill="#f4f400" opacity="1"/>
<rect x="206" y="383" width="1" height="1" fill="#f4f400" opacity="0.45"/>
<rect x="207" y="381" width="1" height="2" fill="#f4f400" opacity="1"/>
<rect x="207" y="383" width="1" height="1" fill="#f4f400" opacity="0.45"/>
<rect x="208" y="381" width="1" height="2" fill="#f4f400" opacity="1"/>
<rect x="208" y="383" width="1" height="1" fill="#f4f400" opacity="0.45"/>
<rect x="209" y="381" width="1" height="2" fill="#f4f400" opacity="1"/>
<rect x="209" y="383" width="1" height="1" fill="#f4f400" opacity="0.45"/>
<rect x="210" y="381" width="1" height="2" fill="#f4f400" opacity="1"/>
<rect x="210" y="383" width="1" height="1" fill="#f4f400" opacity="0.45"/>
<rect x="210" y="379" width="1" height="2" fill="#f4f400" opacity="0.8"/>
<rect x="211" y="381" width="1" height="2" fill="#f4f400" opacity="1"/>
<rect x="211" y="383" width="1" height="1" fill="#f4f400" opacity="0.45"/>
<rect x="212" y="381" width="1" height="2" fill="#f4f400" opacity="1"/>
<rect x="212" y="383" width="1" height="1" fill="#f4f400" opacity="0.45"/>
<rect x="213" y="381" width="1" height="2" fill="#f4f400" opacity="1"/>
<rect x="213" y="383" width="1" height="1" fill="#f4f400" opacity="0.45"/>
<rect x="213" y="380" width="1" height="1" fill="#f4f400" opacity="0.9"/>
<rect x="214" y="381" width="1" height="2" fill="#f4f400" opacity="1"/>
<rect x="214" y="383" width="1" height="1" fill="#f4f400" opacity="0.45"/>
<rect x="215" y="381" width="1" height="2" fill="#f4f400" opacity="1"/>
<rect x="215" y="383" width="1" height="1" fill="#f4f400" opacity="0.45"/>
<rect x="216" y="381" width="1" height="2" fill="#f4f400" opacity="1"/>
<rect x="216" y="383" width="1" height="1" fill="#f4f400" opacity="0.45"/>
<rect x="217" y="381" width="1" height="2" fill="#f4f400" opacity="1"/>
<rect x="217" y="383" width="1" height="1" fill="#f4f400" opacity="0.45"/>
<rect x="218" y="381" width="1" height="2" fill="#f4f400" opacity="1"/>
<rect x="218" y="383" width="1" height="1" fill="#f4f400" opacity="0.45"/>
<rect x="218" y="380" width="1" height="1" fill="#f4f400" opacity="0.9"/>
<rect x="219" y="381" width="1" height="2" fill="#f4f400" opacity="1"/>
<rect x="219" y="383" width="1" height="1" fill="#f4f400" opacity="0.45"/>
<rect x="219" y="380" width="1" height="1" fill="#f4f400" opacity="0.9"/>
<rect x="220" y="381" width="1" height="2" fill="#f4f400" opacity="1"/>
<rect x="220" y="383" width="1" height="1" fill="#f4f400" opacity="0.45"/>
<rect x="221" y="381" width="1" height="2" fill="#f4f400" opacity="1"/>
<rect x="221" y="383" width="1" height="1" fill="#f4f400" opacity="0.45"/>
<rect x="222" y="381" width="1" height="2" fill="#f4f400" opacity="1"/>
<rect x="222" y="383" width="1" height="1" fill="#f4f400" opacity="0.45"/>
<rect x="223" y="381" width="1" height="2" fill="#f4f400" opacity="1"/>
<rect x="223" y="383" width="1" height="1" fill="#f4f400" opacity="0.45"/>
<rect x="223" y="380" width="1" height="1" fill="#f4f400" opacity="0.9"/>
<rect x="223" y="376" width="1.6" height="1.6" fill="#f4f400" opacity="0.95"/>
<rect x="224" y="381" width="1" height="2" fill="#f4f400" opacity="1"/>
<rect x="224" y="383" width="1" height="1" fill="#f4f400" opacity="0.45"/>
<rect x="225" y="381" width="1" height="2" fill="#f4f400" opacity="1"/>
<rect x="225" y="383" width="1" height="1" fill="#f4f400" opacity="0.45"/>
<rect x="226" y="381" width="1" height="2" fill="#f4f400" opacity="1"/>
<rect x="226" y="383" width="1" height="1" fill="#f4f400" opacity="0.45"/>
<rect x="227" y="381" width="1" height="2" fill="#f4f400" opacity="1"/>
<rect x="227" y="383" width="1" height="1" fill="#f4f400" opacity="0.45"/>
<rect x="227" y="379" width="1" height="2" fill="#f4f400" opacity="0.8"/>
<rect x="228" y="381" width="1" height="2" fill="#f4f400" opacity="1"/>
<rect x="228" y="383" width="1" height="1" fill="#f4f400" opacity="0.45"/>
<rect x="229" y="381" width="1" height="2" fill="#f4f400" opacity="1"/>
<rect x="229" y="383" width="1" height="1" fill="#f4f400" opacity="0.45"/>
<rect x="230" y="381" width="1" height="2" fill="#f4f400" opacity="1"/>
<rect x="230" y="383" width="1" height="1" fill="#f4f400" opacity="0.45"/>
<rect x="230" y="380" width="1" height="1" fill="#f4f400" opacity="0.9"/>
<rect x="231" y="381" width="1" height="2" fill="#f4f400" opacity="1"/>
<rect x="231" y="383" width="1" height="1" fill="#f4f400" opacity="0.45"/>
<rect x="231" y="380" width="1" height="1" fill="#f4f400" opacity="0.9"/>
<rect x="232" y="381" width="1" height="2" fill="#f4f400" opacity="1"/>
<rect x="232" y="383" width="1" height="1" fill="#f4f400" opacity="0.45"/>
<rect x="233" y="381" width="1" height="2" fill="#f4f400" opacity="1"/>
<rect x="233" y="383" width="1" height="1" fill="#f4f400" opacity="0.45"/>
<rect x="234" y="381" width="1" height="2" fill="#f4f400" opacity="1"/>
<rect x="234" y="383" width="1" height="1" fill="#f4f400" opacity="0.45"/>
<rect x="235" y="381" width="1" height="2" fill="#f4f400" opacity="1"/>
<rect x="235" y="383" width="1" height="1" fill="#f4f400" opacity="0.45"/>
<rect x="235" y="377" width="1.6" height="1.6" fill="#f4f400" opacity="0.95"/>
<rect x="236" y="381" width="1" height="2" fill="#f4f400" opacity="1"/>
<rect x="236" y="383" width="1" height="1" fill="#f4f400" opacity="0.45"/>
<rect x="237" y="381" width="1" height="2" fill="#f4f400" opacity="1"/>
<rect x="237" y="383" width="1" height="1" fill="#f4f400" opacity="0.45"/>
<rect x="238" y="381" width="1" height="2" fill="#f4f400" opacity="1"/>
<rect x="238" y="383" width="1" height="1" fill="#f4f400" opacity="0.45"/>
<rect x="239" y="381" width="1" height="2" fill="#f4f400" opacity="1"/>
<rect x="239" y="383" width="1" height="1" fill="#f4f400" opacity="0.45"/>
<rect x="239" y="376" width="1.6" height="1.6" fill="#f4f400" opacity="0.95"/>
<rect x="240" y="381" width="1" height="2" fill="#f4f400" opacity="1"/>
<rect x="240" y="383" width="1" height="1" fill="#f4f400" opacity="0.45"/>
<rect x="241" y="381" width="1" height="2" fill="#f4f400" opacity="1"/>
<rect x="241" y="383" width="1" height="1" fill="#f4f400" opacity="0.45"/>
<rect x="242" y="381" width="1" height="2" fill="#f4f400" opacity="1"/>
<rect x="242" y="383" width="1" height="1" fill="#f4f400" opacity="0.45"/>
<rect x="243" y="381" width="1" height="2" fill="#f4f400" opacity="1"/>
<rect x="243" y="383" width="1" height="1" fill="#f4f400" opacity="0.45"/>
<rect x="243" y="375" width="1.6" height="1.6" fill="#f4f400" opacity="0.95"/>
<rect x="244" y="381" width="1" height="2" fill="#f4f400" opacity="1"/>
<rect x="244" y="383" width="1" height="1" fill="#f4f400" opacity="0.45"/>
<rect x="245" y="381" width="1" height="2" fill="#f4f400" opacity="1"/>
<rect x="245" y="383" width="1" height="1" fill="#f4f400" opacity="0.45"/>
<rect x="246" y="381" width="1" height="2" fill="#f4f400" opacity="1"/>
<rect x="246" y="383" width="1" height="1" fill="#f4f400" opacity="0.45"/>
<rect x="247" y="381" width="1" height="2" fill="#f4f400" opacity="1"/>
<rect x="247" y="383" width="1" height="1" fill="#f4f400" opacity="0.45"/>
<rect x="248" y="381" width="1" height="2" fill="#f4f400" opacity="1"/>
<rect x="248" y="383" width="1" height="1" fill="#f4f400" opacity="0.45"/>
<rect x="249" y="381" width="1" height="2" fill="#f4f400" opacity="1"/>
<rect x="249" y="383" width="1" height="1" fill="#f4f400" opacity="0.45"/>
<rect x="250" y="381" width="1" height="2" fill="#f4f400" opacity="1"/>
<rect x="250" y="383" width="1" height="1" fill="#f4f400" opacity="0.45"/>
<rect x="251" y="381" width="1" height="2" fill="#f4f400" opacity="1"/>
<rect x="251" y="383" width="1" height="1" fill="#f4f400" opacity="0.45"/>
<rect x="251" y="380" width="1" height="1" fill="#f4f400" opacity="0.9"/>
<rect x="252" y="381" width="1" height="2" fill="#f4f400" opacity="1"/>
<rect x="252" y="383" width="1" height="1" fill="#f4f400" opacity="0.45"/>
<rect x="253" y="381" width="1" height="2" fill="#f4f400" opacity="1"/>
<rect x="253" y="383" width="1" height="1" fill="#f4f400" opacity="0.45"/>
<rect x="254" y="381" width="1" height="2" fill="#f4f400" opacity="1"/>
<rect x="254" y="383" width="1" height="1" fill="#f4f400" opacity="0.45"/>
<rect x="254" y="379" width="1" height="2" fill="#f4f400" opacity="0.8"/>
<rect x="255" y="381" width="1" height="2" fill="#f4f400" opacity="1"/>
<rect x="255" y="383" width="1" height="1" fill="#f4f400" opacity="0.45"/>
<rect x="255" y="380" width="1" height="1" fill="#f4f400" opacity="0.9"/>
<rect x="256" y="381" width="1" height="2" fill="#f4f400" opacity="1"/>
<rect x="256" y="383" width="1" height="1" fill="#f4f400" opacity="0.45"/>
<rect x="257" y="381" width="1" height="2" fill="#f4f400" opacity="1"/>
<rect x="257" y="383" width="1" height="1" fill="#f4f400" opacity="0.45"/>
<rect x="257" y="380" width="1" height="1" fill="#f4f400" opacity="0.9"/>
<rect x="258" y="381" width="1" height="2" fill="#f4f400" opacity="1"/>
<rect x="258" y="383" width="1" height="1" fill="#f4f400" opacity="0.45"/>
<rect x="259" y="381" width="1" height="2" fill="#f4f400" opacity="1"/>
<rect x="259" y="383" width="1" height="1" fill="#f4f400" opacity="0.45"/>
<rect x="260" y="381" width="1" height="2" fill="#f4f400" opacity="1"/>
<rect x="260" y="383" width="1" height="1" fill="#f4f400" opacity="0.45"/>
<rect x="261" y="381" width="1" height="2" fill="#f4f400" opacity="1"/>
<rect x="261" y="383" width="1" height="1" fill="#f4f400" opacity="0.45"/>
<rect x="262" y="381" width="1" height="2" fill="#f4f400" opacity="1"/>
<rect x="262" y="383" width="1" height="1" fill="#f4f400" opacity="0.45"/>
<rect x="262" y="379" width="1" height="2" fill="#f4f400" opacity="0.8"/>
<rect x="263" y="381" width="1" height="2" fill="#f4f400" opacity="1"/>
<rect x="263" y="383" width="1" height="1" fill="#f4f400" opacity="0.45"/>
<rect x="263" y="380" width="1" height="1" fill="#f4f400" opacity="0.9"/>
<rect x="264" y="381" width="1" height="2" fill="#f4f400" opacity="1"/>
<rect x="264" y="383" width="1" height="1" fill="#f4f400" opacity="0.45"/>
<rect x="265" y="381" width="1" height="2" fill="#f4f400" opacity="1"/>
<rect x="265" y="383" width="1" height="1" fill="#f4f400" opacity="0.45"/>
<rect x="265" y="380" width="1" height="1" fill="#f4f400" opacity="0.9"/>
<rect x="266" y="381" width="1" height="2" fill="#f4f400" opacity="1"/>
<rect x="266" y="383" width="1" height="1" fill="#f4f400" opacity="0.45"/>
<rect x="267" y="381" width="1" height="2" fill="#f4f400" opacity="1"/>
<rect x="267" y="383" width="1" height="1" fill="#f4f400" opacity="0.45"/>
<rect x="268" y="381" width="1" height="2" fill="#f4f400" opacity="1"/>
<rect x="268" y="383" width="1" height="1" fill="#f4f400" opacity="0.45"/>
<rect x="269" y="381" width="1" height="2" fill="#f4f400" opacity="1"/>
<rect x="269" y="383" width="1" height="1" fill="#f4f400" opacity="0.45"/>
<rect x="269" y="377" width="1.6" height="1.6" fill="#f4f400" opacity="0.95"/>
<rect x="270" y="381" width="1" height="2" fill="#f4f400" opacity="1"/>
<rect x="270" y="383" width="1" height="1" fill="#f4f400" opacity="0.45"/>
<rect x="271" y="381" width="1" height="2" fill="#f4f400" opacity="1"/>
<rect x="271" y="383" width="1" height="1" fill="#f4f400" opacity="0.45"/>
<rect x="272" y="381" width="1" height="2" fill="#f4f400" opacity="1"/>
<rect x="272" y="383" width="1" height="1" fill="#f4f400" opacity="0.45"/>
<rect x="273" y="381" width="1" height="2" fill="#f4f400" opacity="1"/>
<rect x="273" y="383" width="1" height="1" fill="#f4f400" opacity="0.45"/>
<rect x="274" y="381" width="1" height="2" fill="#f4f400" opacity="1"/>
<rect x="274" y="383" width="1" height="1" fill="#f4f400" opacity="0.45"/>
<rect x="274" y="379" width="1" height="2" fill="#f4f400" opacity="0.8"/>
<rect x="275" y="381" width="1" height="2" fill="#f4f400" opacity="1"/>
<rect x="275" y="383" width="1" height="1" fill="#f4f400" opacity="0.45"/>
<rect x="276" y="381" width="1" height="2" fill="#f4f400" opacity="1"/>
<rect x="276" y="383" width="1" height="1" fill="#f4f400" opacity="0.45"/>
<rect x="277" y="381" width="1" height="2" fill="#f4f400" opacity="1"/>
<rect x="277" y="383" width="1" height="1" fill="#f4f400" opacity="0.45"/>
<rect x="278" y="381" width="1" height="2" fill="#f4f400" opacity="1"/>
<rect x="278" y="383" width="1" height="1" fill="#f4f400" opacity="0.45"/>
<rect x="279" y="381" width="1" height="2" fill="#f4f400" opacity="1"/>
<rect x="279" y="383" width="1" height="1" fill="#f4f400" opacity="0.45"/>
<rect x="279" y="380" width="1" height="1" fill="#f4f400" opacity="0.9"/>
<rect x="280" y="381" width="1" height="2" fill="#f4f400" opacity="1"/>
<rect x="280" y="383" width="1" height="1" fill="#f4f400" opacity="0.45"/>
<rect x="282" y="381" width="1" height="2" fill="#f4f400" opacity="1"/>
<rect x="282" y="383" width="1" height="1" fill="#f4f400" opacity="0.45"/>
<rect x="282" y="380" width="1" height="1" fill="#f4f400" opacity="0.9"/>
<rect x="283" y="381" width="1" height="2" fill="#f4f400" opacity="1"/>
<rect x="283" y="383" width="1" height="1" fill="#f4f400" opacity="0.45"/>
<rect x="284" y="381" width="1" height="2" fill="#f4f400" opacity="1"/>
<rect x="284" y="383" width="1" height="1" fill="#f4f400" opacity="0.45"/>
<rect x="285" y="381" width="1" height="2" fill="#f4f400" opacity="1"/>
<rect x="285" y="383" width="1" height="1" fill="#f4f400" opacity="0.45"/>
<rect x="286" y="381" width="1" height="2" fill="#f4f400" opacity="1"/>
<rect x="286" y="383" width="1" height="1" fill="#f4f400" opacity="0.45"/>
<rect x="287" y="381" width="1" height="2" fill="#f4f400" opacity="1"/>
<rect x="287" y="383" width="1" height="1" fill="#f4f400" opacity="0.45"/>
<rect x="288" y="381" width="1" height="2" fill="#f4f400" opacity="1"/>
<rect x="288" y="383" width="1" height="1" fill="#f4f400" opacity="0.45"/>
<rect x="289" y="381" width="1" height="2" fill="#f4f400" opacity="1"/>
<rect x="289" y="383" width="1" height="1" fill="#f4f400" opacity="0.45"/>
<rect x="290" y="381" width="1" height="2" fill="#f4f400" opacity="1"/>
<rect x="290" y="383" width="1" height="1" fill="#f4f400" opacity="0.45"/>
<rect x="291" y="381" width="1" height="2" fill="#f4f400" opacity="1"/>
<rect x="291" y="383" width="1" height="1" fill="#f4f400" opacity="0.45"/>
<rect x="292" y="381" width="1" height="2" fill="#f4f400" opacity="1"/>
<rect x="292" y="383" width="1" height="1" fill="#f4f400" opacity="0.45"/>
<rect x="293" y="381" width="1" height="2" fill="#f4f400" opacity="1"/>
<rect x="293" y="383" width="1" height="1" fill="#f4f400" opacity="0.45"/>
<rect x="294" y="381" width="1" height="2" fill="#f4f400" opacity="1"/>
<rect x="294" y="383" width="1" height="1" fill="#f4f400" opacity="0.45"/>
<rect x="294" y="380" width="1" height="1" fill="#f4f400" opacity="0.9"/>
<rect x="295" y="381" width="1" height="2" fill="#f4f400" opacity="1"/>
<rect x="295" y="383" width="1" height="1" fill="#f4f400" opacity="0.45"/>
<rect x="295" y="379" width="1" height="2" fill="#f4f400" opacity="0.8"/>
<rect x="296" y="381" width="1" height="2" fill="#f4f400" opacity="1"/>
<rect x="296" y="383" width="1" height="1" fill="#f4f400" opacity="0.45"/>
<rect x="297" y="381" width="1" height="2" fill="#f4f400" opacity="1"/>
<rect x="297" y="383" width="1" height="1" fill="#f4f400" opacity="0.45"/>
<rect x="298" y="381" width="1" height="2" fill="#f4f400" opacity="1"/>
<rect x="298" y="383" width="1" height="1" fill="#f4f400" opacity="0.45"/>
<rect x="299" y="381" width="1" height="2" fill="#f4f400" opacity="1"/>
<rect x="299" y="383" width="1" height="1" fill="#f4f400" opacity="0.45"/>
<rect x="300" y="381" width="1" height="2" fill="#f4f400" opacity="1"/>
<rect x="300" y="383" width="1" height="1" fill="#f4f400" opacity="0.45"/>
<rect x="300" y="380" width="1" height="1" fill="#f4f400" opacity="0.9"/>
<rect x="301" y="381" width="1" height="2" fill="#f4f400" opacity="1"/>
<rect x="301" y="383" width="1" height="1" fill="#f4f400" opacity="0.45"/>
<rect x="302" y="381" width="1" height="2" fill="#f4f400" opacity="1"/>
<rect x="302" y="383" width="1" height="1" fill="#f4f400" opacity="0.45"/>
<rect x="302" y="380" width="1" height="1" fill="#f4f400" opacity="0.9"/>
<rect x="303" y="381" width="1" height="2" fill="#f4f400" opacity="1"/>
<rect x="303" y="383" width="1" height="1" fill="#f4f400" opacity="0.45"/>
<rect x="303" y="379" width="1" height="2" fill="#f4f400" opacity="0.8"/>
<rect x="304" y="381" width="1" height="2" fill="#f4f400" opacity="1"/>
<rect x="304" y="383" width="1" height="1" fill="#f4f400" opacity="0.45"/>
<rect x="305" y="381" width="1" height="2" fill="#f4f400" opacity="1"/>
<rect x="305" y="383" width="1" height="1" fill="#f4f400" opacity="0.45"/>
<rect x="305" y="380" width="1" height="1" fill="#f4f400" opacity="0.9"/>
<rect x="306" y="381" width="1" height="2" fill="#f4f400" opacity="1"/>
<rect x="306" y="383" width="1" height="1" fill="#f4f400" opacity="0.45"/>
<rect x="307" y="381" width="1" height="2" fill="#f4f400" opacity="1"/>
<rect x="307" y="383" width="1" height="1" fill="#f4f400" opacity="0.45"/>
<rect x="308" y="381" width="1" height="2" fill="#f4f400" opacity="1"/>
<rect x="308" y="383" width="1" height="1" fill="#f4f400" opacity="0.45"/>
<rect x="309" y="381" width="1" height="2" fill="#f4f400" opacity="1"/>
<rect x="309" y="383" width="1" height="1" fill="#f4f400" opacity="0.45"/>
<rect x="310" y="381" width="1" height="2" fill="#f4f400" opacity="1"/>
<rect x="310" y="383" width="1" height="1" fill="#f4f400" opacity="0.45"/>
<rect x="311" y="381" width="1" height="2" fill="#f4f400" opacity="1"/>
<rect x="311" y="383" width="1" height="1" fill="#f4f400" opacity="0.45"/>
<rect x="311" y="379" width="1" height="2" fill="#f4f400" opacity="0.8"/>
<rect x="312" y="381" width="1" height="2" fill="#f4f400" opacity="1"/>
<rect x="312" y="383" width="1" height="1" fill="#f4f400" opacity="0.45"/>
<rect x="312" y="380" width="1" height="1" fill="#f4f400" opacity="0.9"/>
<rect x="313" y="381" width="1" height="2" fill="#f4f400" opacity="1"/>
<rect x="313" y="383" width="1" height="1" fill="#f4f400" opacity="0.45"/>
<rect x="314" y="381" width="1" height="2" fill="#f4f400" opacity="1"/>
<rect x="314" y="383" width="1" height="1" fill="#f4f400" opacity="0.45"/>
<rect x="315" y="381" width="1" height="2" fill="#f4f400" opacity="1"/>
<rect x="315" y="383" width="1" height="1" fill="#f4f400" opacity="0.45"/>
<rect x="316" y="381" width="1" height="2" fill="#f4f400" opacity="1"/>
<rect x="316" y="383" width="1" height="1" fill="#f4f400" opacity="0.45"/>
<rect x="316" y="380" width="1" height="1" fill="#f4f400" opacity="0.9"/>
<rect x="317" y="381" width="1" height="2" fill="#f4f400" opacity="1"/>
<rect x="317" y="383" width="1" height="1" fill="#f4f400" opacity="0.45"/>
<rect x="318" y="381" width="1" height="2" fill="#f4f400" opacity="1"/>
<rect x="318" y="383" width="1" height="1" fill="#f4f400" opacity="0.45"/>
<rect x="319" y="381" width="1" height="2" fill="#f4f400" opacity="1"/>
<rect x="319" y="383" width="1" height="1" fill="#f4f400" opacity="0.45"/>
<rect x="320" y="381" width="1" height="2" fill="#f4f400" opacity="1"/>
<rect x="320" y="383" width="1" height="1" fill="#f4f400" opacity="0.45"/>
<rect x="320" y="379" width="1" height="2" fill="#f4f400" opacity="0.8"/>
<rect x="321" y="381" width="1" height="2" fill="#f4f400" opacity="1"/>
<rect x="321" y="383" width="1" height="1" fill="#f4f400" opacity="0.45"/>
<rect x="322" y="381" width="1" height="2" fill="#f4f400" opacity="1"/>
<rect x="322" y="383" width="1" height="1" fill="#f4f400" opacity="0.45"/>
<rect x="323" y="381" width="1" height="2" fill="#f4f400" opacity="1"/>
<rect x="323" y="383" width="1" height="1" fill="#f4f400" opacity="0.45"/>
<rect x="324" y="381" width="1" height="2" fill="#f4f400" opacity="1"/>
<rect x="324" y="383" width="1" height="1" fill="#f4f400" opacity="0.45"/>
<rect x="325" y="381" width="1" height="2" fill="#f4f400" opacity="1"/>
<rect x="325" y="383" width="1" height="1" fill="#f4f400" opacity="0.45"/>
<rect x="326" y="381" width="1" height="2" fill="#f4f400" opacity="1"/>
<rect x="326" y="383" width="1" height="1" fill="#f4f400" opacity="0.45"/>
<rect x="327" y="381" width="1" height="2" fill="#f4f400" opacity="1"/>
<rect x="327" y="383" width="1" height="1" fill="#f4f400" opacity="0.45"/>
<rect x="328" y="381" width="1" height="2" fill="#f4f400" opacity="1"/>
<rect x="328" y="383" width="1" height="1" fill="#f4f400" opacity="0.45"/>
<rect x="329" y="381" width="1" height="2" fill="#f4f400" opacity="1"/>
<rect x="329" y="383" width="1" height="1" fill="#f4f400" opacity="0.45"/>
<rect x="330" y="381" width="1" height="2" fill="#f4f400" opacity="1"/>
<rect x="330" y="383" width="1" height="1" fill="#f4f400" opacity="0.45"/>
<rect x="331" y="381" width="1" height="2" fill="#f4f400" opacity="1"/>
<rect x="331" y="383" width="1" height="1" fill="#f4f400" opacity="0.45"/>
<rect x="332" y="381" width="1" height="2" fill="#f4f400" opacity="1"/>
<rect x="332" y="383" width="1" height="1" fill="#f4f400" opacity="0.45"/>
<rect x="333" y="381" width="1" height="2" fill="#f4f400" opacity="1"/>
<rect x="333" y="383" width="1" height="1" fill="#f4f400" opacity="0.45"/>
<rect x="334" y="381" width="1" height="2" fill="#f4f400" opacity="1"/>
<rect x="334" y="383" width="1" height="1" fill="#f4f400" opacity="0.45"/>
<rect x="334" y="380" width="1" height="1" fill="#f4f400" opacity="0.9"/>
<rect x="335" y="381" width="1" height="2" fill="#f4f400" opacity="1"/>
<rect x="335" y="383" width="1" height="1" fill="#f4f400" opacity="0.45"/>
<rect x="336" y="381" width="1" height="2" fill="#f4f400" opacity="1"/>
<rect x="336" y="383" width="1" height="1" fill="#f4f400" opacity="0.45"/>
<rect x="337" y="381" width="1" height="2" fill="#f4f400" opacity="1"/>
<rect x="337" y="383" width="1" height="1" fill="#f4f400" opacity="0.45"/>
<rect x="337" y="380" width="1" height="1" fill="#f4f400" opacity="0.9"/>
<rect x="338" y="381" width="1" height="2" fill="#f4f400" opacity="1"/>
<rect x="338" y="383" width="1" height="1" fill="#f4f400" opacity="0.45"/>
<rect x="338" y="380" width="1" height="1" fill="#f4f400" opacity="0.9"/>
<rect x="339" y="381" width="1" height="2" fill="#f4f400" opacity="1"/>
<rect x="339" y="383" width="1" height="1" fill="#f4f400" opacity="0.45"/>
<rect x="339" y="380" width="1" height="1" fill="#f4f400" opacity="0.9"/>
<rect x="340" y="381" width="1" height="2" fill="#f4f400" opacity="1"/>
<rect x="340" y="383" width="1" height="1" fill="#f4f400" opacity="0.45"/>
<rect x="341" y="381" width="1" height="2" fill="#f4f400" opacity="1"/>
<rect x="341" y="383" width="1" height="1" fill="#f4f400" opacity="0.45"/>
<rect x="341" y="380" width="1" height="1" fill="#f4f400" opacity="0.9"/>
<rect x="342" y="381" width="1" height="2" fill="#f4f400" opacity="1"/>
<rect x="342" y="383" width="1" height="1" fill="#f4f400" opacity="0.45"/>
<rect x="345" y="381" width="1" height="2" fill="#f4f400" opacity="1"/>
<rect x="345" y="383" width="1" height="1" fill="#f4f400" opacity="0.45"/>
<rect x="347" y="381" width="1" height="2" fill="#f4f400" opacity="1"/>
<rect x="347" y="383" width="1" height="1" fill="#f4f400" opacity="0.45"/>
<rect x="348" y="381" width="1" height="2" fill="#f4f400" opacity="1"/>
<rect x="348" y="383" width="1" height="1" fill="#f4f400" opacity="0.45"/>
<rect x="349" y="381" width="1" height="2" fill="#f4f400" opacity="1"/>
<rect x="349" y="383" width="1" height="1" fill="#f4f400" opacity="0.45"/>
<rect x="352" y="381" width="1" height="2" fill="#f4f400" opacity="1"/>
<rect x="352" y="383" width="1" height="1" fill="#f4f400" opacity="0.45"/>
<rect x="353" y="381" width="1" height="2" fill="#f4f400" opacity="1"/>
<rect x="353" y="383" width="1" height="1" fill="#f4f400" opacity="0.45"/>
<rect x="353" y="380" width="1" height="1" fill="#f4f400" opacity="0.9"/>
<rect x="354" y="381" width="1" height="2" fill="#f4f400" opacity="1"/>
<rect x="354" y="383" width="1" height="1" fill="#f4f400" opacity="0.45"/>
<rect x="363" y="381" width="1" height="2" fill="#f4f400" opacity="1"/>
<rect x="363" y="383" width="1" height="1" fill="#f4f400" opacity="0.45"/>
<rect x="364" y="381" width="1" height="2" fill="#f4f400" opacity="1"/>
<rect x="364" y="383" width="1" height="1" fill="#f4f400" opacity="0.45"/>
<rect x="365" y="381" width="1" height="2" fill="#f4f400" opacity="1"/>
<rect x="365" y="383" width="1" height="1" fill="#f4f400" opacity="0.45"/>
<rect x="369" y="381" width="1" height="2" fill="#f4f400" opacity="1"/>
<rect x="369" y="383" width="1" height="1" fill="#f4f400" opacity="0.45"/>
<rect x="369" y="380" width="1" height="1" fill="#f4f400" opacity="0.9"/>
<rect x="369" y="374" width="1.6" height="1.6" fill="#f4f400" opacity="0.95"/>
<rect x="370" y="381" width="1" height="2" fill="#f4f400" opacity="1"/>
<rect x="370" y="383" width="1" height="1" fill="#f4f400" opacity="0.45"/>
<rect x="371" y="381" width="1" height="2" fill="#f4f400" opacity="1"/>
<rect x="371" y="383" width="1" height="1" fill="#f4f400" opacity="0.45"/>
<rect x="371" y="380" width="1" height="1" fill="#f4f400" opacity="0.9"/>
<rect x="372" y="381" width="1" height="2" fill="#f4f400" opacity="1"/>
<rect x="372" y="383" width="1" height="1" fill="#f4f400" opacity="0.45"/>
<rect x="372" y="380" width="1" height="1" fill="#f4f400" opacity="0.9"/>
<rect x="373" y="381" width="1" height="2" fill="#f4f400" opacity="1"/>
<rect x="373" y="383" width="1" height="1" fill="#f4f400" opacity="0.45"/>
<rect x="374" y="381" width="1" height="2" fill="#f4f400" opacity="1"/>
<rect x="374" y="383" width="1" height="1" fill="#f4f400" opacity="0.45"/>
<rect x="375" y="381" width="1" height="2" fill="#f4f400" opacity="1"/>
<rect x="375" y="383" width="1" height="1" fill="#f4f400" opacity="0.45"/>
<rect x="376" y="381" width="1" height="2" fill="#f4f400" opacity="1"/>
<rect x="376" y="383" width="1" height="1" fill="#f4f400" opacity="0.45"/>
<rect x="376" y="380" width="1" height="1" fill="#f4f400" opacity="0.9"/>
<rect x="377" y="381" width="1" height="2" fill="#f4f400" opacity="1"/>
<rect x="377" y="383" width="1" height="1" fill="#f4f400" opacity="0.45"/>
<rect x="378" y="381" width="1" height="2" fill="#f4f400" opacity="1"/>
<rect x="378" y="383" width="1" height="1" fill="#f4f400" opacity="0.45"/>
<rect x="380" y="381" width="1" height="2" fill="#f4f400" opacity="1"/>
<rect x="380" y="383" width="1" height="1" fill="#f4f400" opacity="0.45"/>
<rect x="381" y="381" width="1" height="2" fill="#f4f400" opacity="1"/>
<rect x="381" y="383" width="1" height="1" fill="#f4f400" opacity="0.45"/>
<rect x="382" y="381" width="1" height="2" fill="#f4f400" opacity="1"/>
<rect x="382" y="383" width="1" height="1" fill="#f4f400" opacity="0.45"/>
<rect x="383" y="381" width="1" height="2" fill="#f4f400" opacity="1"/>
<rect x="383" y="383" width="1" height="1" fill="#f4f400" opacity="0.45"/>
<rect x="383" y="380" width="1" height="1" fill="#f4f400" opacity="0.9"/>
<rect x="383" y="374" width="1.6" height="1.6" fill="#f4f400" opacity="0.95"/>
<rect x="384" y="381" width="1" height="2" fill="#f4f400" opacity="1"/>
<rect x="384" y="383" width="1" height="1" fill="#f4f400" opacity="0.45"/>
<rect x="384" y="380" width="1" height="1" fill="#f4f400" opacity="0.9"/>
<rect x="385" y="381" width="1" height="2" fill="#f4f400" opacity="1"/>
<rect x="385" y="383" width="1" height="1" fill="#f4f400" opacity="0.45"/>
<rect x="386" y="381" width="1" height="2" fill="#f4f400" opacity="1"/>
<rect x="386" y="383" width="1" height="1" fill="#f4f400" opacity="0.45"/>
<rect x="386" y="379" width="1" height="2" fill="#f4f400" opacity="0.8"/>
<rect x="387" y="381" width="1" height="2" fill="#f4f400" opacity="1"/>
<rect x="387" y="383" width="1" height="1" fill="#f4f400" opacity="0.45"/>
<rect x="388" y="381" width="1" height="2" fill="#f4f400" opacity="1"/>
<rect x="388" y="383" width="1" height="1" fill="#f4f400" opacity="0.45"/>
<rect x="389" y="381" width="1" height="2" fill="#f4f400" opacity="1"/>
<rect x="389" y="383" width="1" height="1" fill="#f4f400" opacity="0.45"/>
<rect x="390" y="381" width="1" height="2" fill="#f4f400" opacity="1"/>
<rect x="390" y="383" width="1" height="1" fill="#f4f400" opacity="0.45"/>
<rect x="390" y="380" width="1" height="1" fill="#f4f400" opacity="0.9"/>
<rect x="391" y="381" width="1" height="2" fill="#f4f400" opacity="1"/>
<rect x="391" y="383" width="1" height="1" fill="#f4f400" opacity="0.45"/>
<rect x="392" y="381" width="1" height="2" fill="#f4f400" opacity="1"/>
<rect x="392" y="383" width="1" height="1" fill="#f4f400" opacity="0.45"/>
<rect x="393" y="381" width="1" height="2" fill="#f4f400" opacity="1"/>
<rect x="393" y="383" width="1" height="1" fill="#f4f400" opacity="0.45"/>
<rect x="393" y="380" width="1" height="1" fill="#f4f400" opacity="0.9"/>
<rect x="394" y="381" width="1" height="2" fill="#f4f400" opacity="1"/>
<rect x="394" y="383" width="1" height="1" fill="#f4f400" opacity="0.45"/>
<rect x="395" y="381" width="1" height="2" fill="#f4f400" opacity="1"/>
<rect x="395" y="383" width="1" height="1" fill="#f4f400" opacity="0.45"/>
<rect x="396" y="381" width="1" height="2" fill="#f4f400" opacity="1"/>
<rect x="396" y="383" width="1" height="1" fill="#f4f400" opacity="0.45"/>
<rect x="397" y="381" width="1" height="2" fill="#f4f400" opacity="1"/>
<rect x="397" y="383" width="1" height="1" fill="#f4f400" opacity="0.45"/>
<rect x="398" y="381" width="1" height="2" fill="#f4f400" opacity="1"/>
<rect x="398" y="383" width="1" height="1" fill="#f4f400" opacity="0.45"/>
<rect x="398" y="375" width="1.6" height="1.6" fill="#f4f400" opacity="0.95"/>
<rect x="400" y="381" width="1" height="2" fill="#f4f400" opacity="1"/>
<rect x="400" y="383" width="1" height="1" fill="#f4f400" opacity="0.45"/>
<rect x="400" y="379" width="1" height="2" fill="#f4f400" opacity="0.8"/>
<rect x="401" y="381" width="1" height="2" fill="#f4f400" opacity="1"/>
<rect x="401" y="383" width="1" height="1" fill="#f4f400" opacity="0.45"/>
<rect x="402" y="381" width="1" height="2" fill="#f4f400" opacity="1"/>
<rect x="402" y="383" width="1" height="1" fill="#f4f400" opacity="0.45"/>
<rect x="405" y="373" width="1.6" height="1.6" fill="#f4f400" opacity="0.95"/>
<rect x="408" y="381" width="1" height="2" fill="#f4f400" opacity="1"/>
<rect x="408" y="383" width="1" height="1" fill="#f4f400" opacity="0.45"/>
<rect x="410" y="381" width="1" height="2" fill="#f4f400" opacity="1"/>
<rect x="410" y="383" width="1" height="1" fill="#f4f400" opacity="0.45"/>
<rect x="410" y="380" width="1" height="1" fill="#f4f400" opacity="0.9"/>
<rect x="411" y="381" width="1" height="2" fill="#f4f400" opacity="1"/>
<rect x="411" y="383" width="1" height="1" fill="#f4f400" opacity="0.45"/>
<rect x="411" y="380" width="1" height="1" fill="#f4f400" opacity="0.9"/>
<rect x="411" y="373" width="1.6" height="1.6" fill="#f4f400" opacity="0.95"/>
<rect x="412" y="381" width="1" height="2" fill="#f4f400" opacity="1"/>
<rect x="412" y="383" width="1" height="1" fill="#f4f400" opacity="0.45"/>
<rect x="413" y="381" width="1" height="2" fill="#f4f400" opacity="1"/>
<rect x="413" y="383" width="1" height="1" fill="#f4f400" opacity="0.45"/>
<rect x="413" y="380" width="1" height="1" fill="#f4f400" opacity="0.9"/>
<rect x="414" y="381" width="1" height="2" fill="#f4f400" opacity="1"/>
<rect x="414" y="383" width="1" height="1" fill="#f4f400" opacity="0.45"/>
<rect x="414" y="379" width="1" height="2" fill="#f4f400" opacity="0.8"/>
<rect x="415" y="381" width="1" height="2" fill="#f4f400" opacity="1"/>
<rect x="415" y="383" width="1" height="1" fill="#f4f400" opacity="0.45"/>
<rect x="416" y="381" width="1" height="2" fill="#f4f400" opacity="1"/>
<rect x="416" y="383" width="1" height="1" fill="#f4f400" opacity="0.45"/>
<rect x="417" y="381" width="1" height="2" fill="#f4f400" opacity="1"/>
<rect x="417" y="383" width="1" height="1" fill="#f4f400" opacity="0.45"/>
<rect x="417" y="373" width="1.6" height="1.6" fill="#f4f400" opacity="0.95"/>
<rect x="419" y="381" width="1" height="2" fill="#f4f400" opacity="1"/>
<rect x="419" y="383" width="1" height="1" fill="#f4f400" opacity="0.45"/>
<rect x="419" y="380" width="1" height="1" fill="#f4f400" opacity="0.9"/>
<rect x="420" y="381" width="1" height="2" fill="#f4f400" opacity="1"/>
<rect x="420" y="383" width="1" height="1" fill="#f4f400" opacity="0.45"/>
<rect x="421" y="381" width="1" height="2" fill="#f4f400" opacity="1"/>
<rect x="421" y="383" width="1" height="1" fill="#f4f400" opacity="0.45"/>
<rect x="421" y="380" width="1" height="1" fill="#f4f400" opacity="0.9"/>
<rect x="422" y="381" width="1" height="2" fill="#f4f400" opacity="1"/>
<rect x="422" y="383" width="1" height="1" fill="#f4f400" opacity="0.45"/>
<rect x="423" y="381" width="1" height="2" fill="#f4f400" opacity="1"/>
<rect x="423" y="383" width="1" height="1" fill="#f4f400" opacity="0.45"/>
<rect x="425" y="381" width="1" height="2" fill="#f4f400" opacity="1"/>
<rect x="425" y="383" width="1" height="1" fill="#f4f400" opacity="0.45"/>
<rect x="426" y="381" width="1" height="2" fill="#f4f400" opacity="1"/>
<rect x="426" y="383" width="1" height="1" fill="#f4f400" opacity="0.45"/>
<rect x="427" y="381" width="1" height="2" fill="#f4f400" opacity="1"/>
<rect x="427" y="383" width="1" height="1" fill="#f4f400" opacity="0.45"/>
<rect x="428" y="381" width="1" height="2" fill="#f4f400" opacity="1"/>
<rect x="428" y="383" width="1" height="1" fill="#f4f400" opacity="0.45"/>
<rect x="429" y="381" width="1" height="2" fill="#f4f400" opacity="1"/>
<rect x="429" y="383" width="1" height="1" fill="#f4f400" opacity="0.45"/>
<rect x="430" y="376" width="1.6" height="1.6" fill="#f4f400" opacity="0.95"/>
<rect x="431" y="381" width="1" height="2" fill="#f4f400" opacity="1"/>
<rect x="431" y="383" width="1" height="1" fill="#f4f400" opacity="0.45"/>
<rect x="436" y="381" width="1" height="2" fill="#f4f400" opacity="1"/>
<rect x="436" y="383" width="1" height="1" fill="#f4f400" opacity="0.45"/>
<rect x="436" y="379" width="1" height="2" fill="#f4f400" opacity="0.8"/>
<rect x="437" y="381" width="1" height="2" fill="#f4f400" opacity="1"/>
<rect x="437" y="383" width="1" height="1" fill="#f4f400" opacity="0.45"/>
<rect x="438" y="381" width="1" height="2" fill="#f4f400" opacity="1"/>
<rect x="438" y="383" width="1" height="1" fill="#f4f400" opacity="0.45"/>
<rect x="438" y="380" width="1" height="1" fill="#f4f400" opacity="0.9"/>
<rect x="439" y="381" width="1" height="2" fill="#f4f400" opacity="1"/>
<rect x="439" y="383" width="1" height="1" fill="#f4f400" opacity="0.45"/>
<rect x="440" y="381" width="1" height="2" fill="#f4f400" opacity="1"/>
<rect x="440" y="383" width="1" height="1" fill="#f4f400" opacity="0.45"/>
<rect x="441" y="381" width="1" height="2" fill="#f4f400" opacity="1"/>
<rect x="441" y="383" width="1" height="1" fill="#f4f400" opacity="0.45"/>
<rect x="442" y="381" width="1" height="2" fill="#f4f400" opacity="1"/>
<rect x="442" y="383" width="1" height="1" fill="#f4f400" opacity="0.45"/>
<rect x="442" y="379" width="1" height="2" fill="#f4f400" opacity="0.8"/>
<rect x="443" y="381" width="1" height="2" fill="#f4f400" opacity="1"/>
<rect x="443" y="383" width="1" height="1" fill="#f4f400" opacity="0.45"/>
<rect x="444" y="381" width="1" height="2" fill="#f4f400" opacity="1"/>
<rect x="444" y="383" width="1" height="1" fill="#f4f400" opacity="0.45"/>
<rect x="445" y="381" width="1" height="2" fill="#f4f400" opacity="1"/>
<rect x="445" y="383" width="1" height="1" fill="#f4f400" opacity="0.45"/>
<rect x="449" y="381" width="1" height="2" fill="#f4f400" opacity="1"/>
<rect x="449" y="383" width="1" height="1" fill="#f4f400" opacity="0.45"/>
<rect x="450" y="381" width="1" height="2" fill="#f4f400" opacity="1"/>
<rect x="450" y="383" width="1" height="1" fill="#f4f400" opacity="0.45"/>
<rect x="451" y="381" width="1" height="2" fill="#f4f400" opacity="1"/>
<rect x="451" y="383" width="1" height="1" fill="#f4f400" opacity="0.45"/>
<rect x="452" y="381" width="1" height="2" fill="#f4f400" opacity="1"/>
<rect x="452" y="383" width="1" height="1" fill="#f4f400" opacity="0.45"/>
<rect x="453" y="381" width="1" height="2" fill="#f4f400" opacity="1"/>
<rect x="453" y="383" width="1" height="1" fill="#f4f400" opacity="0.45"/>
<rect x="454" y="381" width="1" height="2" fill="#f4f400" opacity="1"/>
<rect x="454" y="383" width="1" height="1" fill="#f4f400" opacity="0.45"/>
<rect x="456" y="381" width="1" height="2" fill="#f4f400" opacity="1"/>
<rect x="456" y="383" width="1" height="1" fill="#f4f400" opacity="0.45"/>
<rect x="457" y="381" width="1" height="2" fill="#f4f400" opacity="1"/>
<rect x="457" y="383" width="1" height="1" fill="#f4f400" opacity="0.45"/>
<rect x="457" y="380" width="1" height="1" fill="#f4f400" opacity="0.9"/>
<rect x="458" y="381" width="1" height="2" fill="#f4f400" opacity="1"/>
<rect x="458" y="383" width="1" height="1" fill="#f4f400" opacity="0.45"/>
<rect x="461" y="381" width="3" height="2" fill="#f4f400" opacity="1"/>
<rect x="469" y="381" width="7" height="2" fill="#f4f400" opacity="1"/>
<rect x="475.5" y="375" width="1.6" height="1.6" fill="#f4f400" opacity="1"/>
<rect x="477" y="381" width="1.6" height="1.6" fill="#f4f400" opacity="1"/>
<rect x="485.5" y="381" width="5" height="2" fill="#f4f400" opacity="1"/>
<rect x="487" y="380" width="2" height="1" fill="#f4f400" opacity="1"/>
<rect x="493.5" y="380.5" width="1.6" height="1.6" fill="#f4f400" opacity="1"/>
<rect x="496.5" y="382" width="1.6" height="1.6" fill="#f4f400" opacity="1"/>
<rect x="508" y="381" width="5" height="2" fill="#f4f400" opacity="1"/>
<rect x="510" y="383" width="2" height="1" fill="#f4f400" opacity="1"/>
<rect x="517.5" y="382" width="1.6" height="1.6" fill="#f4f400" opacity="1"/>
<rect x="527" y="381" width="7" height="2" fill="#f4f400" opacity="1"/>
<rect x="541" y="381" width="1.6" height="1.6" fill="#f4f400" opacity="1"/>
<rect x="544" y="379.5" width="1.6" height="1.6" fill="#f4f400" opacity="1"/>
<rect x="547.5" y="382.5" width="1.6" height="1.6" fill="#f4f400" opacity="1"/>
<rect x="556" y="381" width="5.5" height="2" fill="#f4f400" opacity="1"/>
<rect x="565.5" y="382.5" width="1.6" height="1.6" fill="#f4f400" opacity="1"/>
<rect x="578.5" y="382.5" width="1.6" height="1.6" fill="#f4f400" opacity="1"/>
<rect x="532" y="238" width="1" height="2" fill="#c8c800"/>
</svg>
<div class="t" id="yl2500" style="left:25.8px;top:241px;font-size:16px;letter-spacing:0.23px">2500</div>
<div class="t" id="yl2000" style="left:25.25px;top:318.0px;font-size:16px;letter-spacing:0.33px">2000</div>
<div class="t" id="yl1500" style="left:25.25px;top:395px;font-size:16px;letter-spacing:0.33px">1500</div>
<div class="t" id="yl1000" style="left:25.25px;top:472.75px;font-size:16px;letter-spacing:0.33px">1000</div>
<div class="t" id="yl500" style="left:35px;top:547.9px;font-size:16px;letter-spacing:0.0px">500</div>
<div class="t" id="mbs" style="left:70px;top:230px;font-size:15px;letter-spacing:0.43px">MB/s</div>
<div class="t" id="ms" style="left:623.2px;top:229.4px;font-size:15px">ms</div>
<div class="t" id="r050" style="left:652.3px;top:240.8px;font-size:16px;letter-spacing:-0.43px">0.50</div>
<div class="t" id="r040" style="left:652.3px;top:317.8px;font-size:16px;letter-spacing:-0.43px">0.40</div>
<div class="t" id="r030" style="left:652.3px;top:394.8px;font-size:16px;letter-spacing:-0.43px">0.30</div>
<div class="t" id="r020" style="left:652.3px;top:471.8px;font-size:16px;letter-spacing:-0.43px">0.20</div>
<div class="t" id="r010" style="left:652.3px;top:549px;font-size:16px;letter-spacing:-0.43px">0.10</div>
<div class="t" id="x0" style="left:66px;top:643.4px;font-size:16px">0</div>
<div class="t" id="x50" style="left:117.3px;top:643.4px;font-size:16px;letter-spacing:0.8px">50</div>
<div class="t" id="x100" style="left:171px;top:643.4px;font-size:16px">100</div>
<div class="t" id="x150" style="left:227.0px;top:643.4px;font-size:16px">150</div>
<div class="t" id="x200" style="left:285.0px;top:643.4px;font-size:16px;letter-spacing:0.5px">200</div>
<div class="t" id="x250" style="left:343.0px;top:643.4px;font-size:16px;letter-spacing:0.0px">250</div>
<div class="t" id="x300" style="left:400.0px;top:643.4px;font-size:16px;letter-spacing:0.5px">300</div>
<div class="t" id="x350" style="left:458.0px;top:643.4px;font-size:16px;letter-spacing:0.0px">350</div>
<div class="t" id="x400" style="left:516px;top:643.4px;font-size:16px">400</div>
<div class="t" id="x450" style="left:573.0px;top:643.4px;font-size:16px">450</div>
<div class="t" id="x500" style="left:620.0px;top:643.4px;font-size:16px">500gB</div>

<!-- right panel -->
<div class="btn" style="left:709px;top:219px;width:110px;height:26px;border:2px solid #0078d7;background:#e1e1e1"></div>
<div class="t" id="start" style="left:744.0px;top:224px;font-size:14px;letter-spacing:1.57px">Start</div>
<div class="sep" style="top:260px"></div>
<svg class="a" style="left:700px;top:263px" width="26" height="48"><circle cx="12.4" cy="12.6" r="8.6" fill="#fff" stroke="#3a3a3a" stroke-width="1.7"/><circle cx="12.4" cy="12.6" r="5" fill="#333"/><circle cx="12.4" cy="33.8" r="8.6" fill="#fff" stroke="#3a3a3a" stroke-width="1.7"/></svg>
<div class="t" id="read" style="left:725.9px;top:268px;font-size:14px;letter-spacing:0.37px">Read</div>

<div class="t" id="write" style="left:727px;top:289.4px;font-size:14px;letter-spacing:0.18px">Write</div>
<div class="sep" style="top:309px"></div>
<div class="chk" style="left:703px;top:317px"></div>
<div class="t" id="short" style="left:725.6px;top:320.0px;font-size:14px;letter-spacing:1.24px">Short stroke</div>
<div class="a" style="left:703px;top:344px;width:93px;height:25px;border:1px solid #ccc;background:#fff"></div>
<div class="a" style="left:770px;top:345px;width:25px;height:23px;background:#f0f0f0;border-left:1px solid #ddd"></div>
<div class="t" id="v40" style="left:709px;top:348.4px;font-size:14px;color:#6d6d6d;letter-spacing:1.6px">40</div>
<div class="t" id="gb" style="left:811.6px;top:349px;font-size:14px;letter-spacing:1.0px">gB</div>
<div class="chk" style="left:703px;top:380px"></div>
<div class="t" id="trate" style="left:727px;top:382.9px;font-size:14px;letter-spacing:0.8px">Transfer rate</div>
<div class="sep" style="top:400px"></div>
<div class="t" id="lmin" style="left:701.6px;top:405.1px;font-size:14px;letter-spacing:0.7px">Minimum</div>
<div class="val" style="top:423px"></div>
<div class="t" id="vmin" style="left:716.0px;top:423.0px;font-size:18.5px;font-weight:bold;transform:scaleX(0.86);transform-origin:0 0;color:#00b8f8;letter-spacing:2.6px;-webkit-text-stroke:0.35px currentColor">1191.4 MB/s</div>
<div class="t" id="lmax" style="left:702.0px;top:448.2px;font-size:14px;letter-spacing:0.4px">Maximum</div>
<div class="val" style="top:465px"></div>
<div class="t" id="vmax" style="left:715.9px;top:465.4px;font-size:18.5px;font-weight:bold;transform:scaleX(0.86);transform-origin:0 0;color:#00b8f8;letter-spacing:2.39px;-webkit-text-stroke:0.35px currentColor">2234.5 MB/s</div>
<div class="t" id="lavg" style="left:703px;top:486px;font-size:14px;letter-spacing:0.45px">Average</div>
<div class="val" style="top:504px"></div>
<div class="t" id="vavg" style="left:715.9px;top:504.6px;font-size:18.5px;font-weight:bold;transform:scaleX(0.86);transform-origin:0 0;color:#00b8f8;letter-spacing:2.39px;-webkit-text-stroke:0.35px currentColor">2214.6 MB/s</div>
<div class="sep" style="top:532px"></div>
<div class="chk" style="left:703px;top:537px"></div>
<div class="t" id="acc" style="left:727px;top:540.0px;font-size:14px;letter-spacing:0.93px">Access time</div>
<div class="val" style="top:560px"></div>
<div class="t" id="vacc" style="left:733.9px;top:560.0px;font-size:18.5px;font-weight:bold;transform:scaleX(0.86);transform-origin:0 0;color:#f8f800;letter-spacing:1.7px;-webkit-text-stroke:0.35px currentColor">0.021 ms</div>
<div class="chk" style="left:703px;top:581px"></div>
<div class="t" id="burst" style="left:726.0px;top:583.3px;font-size:14px;letter-spacing:1.11px">Burst rate</div>
<div class="val" style="top:603px"></div>
<div class="t" id="vburst" style="left:722px;top:604px;font-size:18.5px;font-weight:bold;transform:scaleX(0.86);transform-origin:0 0;color:#fff;letter-spacing:2.48px;-webkit-text-stroke:0.35px currentColor">892.6 MB/s</div>
<div class="t" id="cpu" style="left:702.2px;top:625.1px;font-size:14px;letter-spacing:0.34px">CPU usage</div>
<div class="val" style="top:645px"></div>
<div class="t" id="vcpu" style="left:755.4px;top:644.6px;font-size:18.5px;font-weight:bold;transform:scaleX(0.86);transform-origin:0 0;color:#fff;letter-spacing:-0.33px;-webkit-text-stroke:0.35px currentColor">2.5%</div>
<div class="t" id="passes" style="left:701.6px;top:680.8px;font-size:14px;letter-spacing:0.7px">Number of passes</div>
<div class="a" style="left:703px;top:700px;width:117px;height:12px;border:1px solid #a8a8a8;border-top-color:#7a7a7a;border-bottom:none;background:#fff"></div>
<div class="a" style="left:795px;top:702px;width:22px;height:10px;background:#ececec;border-left:1px solid #c8c8c8;border-right:1px solid #c8c8c8"></div>

<!-- ICONS -->
<svg class="a" style="left:0;top:0" width="1013" height="720" viewBox="0 0 1013 720">
<defs>
<linearGradient id="purp" x1="0" y1="0" x2="1" y2="1"><stop offset="0" stop-color="#e070e0"/><stop offset="0.35" stop-color="#c020c0"/><stop offset="1" stop-color="#a000a8"/></linearGradient>
<linearGradient id="can" x1="0" y1="0" x2="1" y2="0"><stop offset="0" stop-color="#555"/><stop offset="0.2" stop-color="#999"/><stop offset="0.3" stop-color="#eee"/><stop offset="0.4" stop-color="#888"/><stop offset="0.6" stop-color="#aaa"/><stop offset="0.8" stop-color="#333"/><stop offset="1" stop-color="#555"/></linearGradient>
<linearGradient id="ylw" x1="0" y1="0" x2="1" y2="1"><stop offset="0" stop-color="#fffbe0"/><stop offset="1" stop-color="#fdf39a"/></linearGradient>
<linearGradient id="fold" x1="0" y1="0" x2="1" y2="1"><stop offset="0" stop-color="#f0d840"/><stop offset="1" stop-color="#d8a010"/></linearGradient>
</defs>
<!-- title hdd icon -->
<path d="M25.6,13.6 L35.2,19.4 L24.4,31.8 L14.8,24.2 Z" fill="#262626" stroke="#262626" stroke-width="1.6" stroke-linejoin="round"/>
<ellipse cx="26.6" cy="19.7" rx="5.3" ry="4.5" transform="rotate(-30 26.6 19.7)" fill="#f0b458"/>
<ellipse cx="26.5" cy="19.6" rx="2.2" ry="1.9" fill="#b4b8c8"/>
<path d="M21,25.5 L24,23.5 L26.5,26.5 L24,28 Z" fill="#8a8a8a"/>
<!-- menu underlines -->
<rect x="12" y="70" width="9" height="1" fill="#000"/>
<rect x="66" y="70" width="12" height="1" fill="#000"/>
<!-- title controls -->
<rect x="830" y="23" width="15" height="1" fill="#000"/>
<rect x="899.5" y="16.5" width="14" height="14" fill="none" stroke="#000" stroke-width="1"/>
<path d="M970,16 L985,31 M985,16 L970,31" stroke="#000" stroke-width="1.1" fill="none"/>
<!-- combo chevron -->
<path d="M391.5,101.5 L397,107 L402.5,101.5" stroke="#555" stroke-width="1.2" fill="none"/>
<!-- thermometer -->
<rect x="451.5" y="92" width="9" height="19" rx="1" fill="#000" opacity="0.25"/>
<rect x="449.5" y="90.5" width="9.5" height="18.5" rx="1.2" fill="#151515"/>
<rect x="451" y="91.8" width="6" height="4.6" fill="#30d8e0"/>
<rect x="451" y="96.4" width="6" height="12" fill="#ea1010"/>
<ellipse cx="454" cy="111" rx="6.3" ry="5.2" fill="#151515"/>
<ellipse cx="453.6" cy="110.6" rx="5" ry="4.1" fill="#ea1010"/>
<rect x="447" y="106.5" width="2" height="7" fill="#40c8d0" opacity="0.8"/>
<rect x="451" y="109.3" width="2" height="1.5" fill="#fff" opacity="0.85"/>
<!-- copy icon 1 -->
<g>
<path d="M624,92.5 H632 L634,94.5 V110.5 H624 Z" fill="#f4f4f4" stroke="#202020" stroke-width="2"/>
<rect x="626.5" y="98" width="5.5" height="1.6" fill="#2a90ff"/>
<rect x="626.5" y="101" width="6" height="1.6" fill="#2a90ff"/>
<rect x="626.5" y="104" width="6" height="1.6" fill="#2a90ff"/>
<path d="M633.5,95 H641.5 L645.5,99 V113 H633.5 Z" fill="#e6e6e6" stroke="#202020" stroke-width="2"/>
<path d="M641,95.5 L641,99.5 L645,99.5" fill="#fff" stroke="#202020" stroke-width="1"/>
<rect x="635.5" y="101" width="5" height="1.6" fill="#2a70ff"/>
<rect x="635.5" y="104" width="8" height="1.6" fill="#2a70ff"/>
<rect x="635.5" y="107" width="8" height="1.6" fill="#2a70ff"/>
</g>
<!-- copy icon 2 (pictures) -->
<g>
<path d="M676,92.5 H684 L686,94.5 V110.5 H676 Z" fill="#f4f4f4" stroke="#202020" stroke-width="2"/>
<rect x="679" y="98" width="6" height="2" fill="#30c0f0"/>
<rect x="679" y="100" width="6" height="6" fill="#10d020"/>
<rect x="681" y="101" width="2" height="3" fill="#d83010"/>
<path d="M685.5,95 H693.5 L697.5,99 V113 H685.5 Z" fill="#e6e6e6" stroke="#202020" stroke-width="2"/>
<path d="M693,95.5 L693,99.5 L697,99.5" fill="#fff" stroke="#202020" stroke-width="1"/>
<rect x="688" y="101" width="7" height="2" fill="#30c0f0"/>
<rect x="688" y="103" width="7" height="6" fill="#10d020"/>
<rect x="690.5" y="104.5" width="2" height="3" fill="#d83010"/>
</g>
<!-- camera -->
<g>
<rect x="728.5" y="98" width="22" height="13" rx="1.5" fill="#2e2e2e"/>
<path d="M735,98.5 V95 Q735,93.5 736.5,93.5 H743.5 Q745,93.5 745,95 V98.5" fill="none" stroke="#333" stroke-width="2"/>
<circle cx="740" cy="104.5" r="4" fill="#e4e4e4"/>
<rect x="744.5" y="100.5" width="3.5" height="3.5" fill="#20e020"/>
<rect x="733" y="98" width="1" height="13" fill="#888"/>
</g>
<!-- gears -->
<g fill="#e4e400" stroke="#707000" stroke-width="1.2">
<g transform="translate(788.5,98.8) scale(0.82)"><path d="M0,-7.3 l1.5,2.5 2.8,-1 0.3,2.9 2.9,0.4 -1,2.8 2.5,1.6 -2.5,1.6 1,2.8 -2.9,0.4 -0.3,2.9 -2.8,-1 -1.5,2.5 -1.5,-2.5 -2.8,1 -0.3,-2.9 -2.9,-0.4 1,-2.8 -2.5,-1.6 2.5,-1.6 -1,-2.8 2.9,-0.4 0.3,-2.9 2.8,1 z"/></g>
<g transform="translate(796.5,106.8) scale(0.82)"><path d="M0,-7.3 l1.5,2.5 2.8,-1 0.3,2.9 2.9,0.4 -1,2.8 2.5,1.6 -2.5,1.6 1,2.8 -2.9,0.4 -0.3,2.9 -2.8,-1 -1.5,2.5 -1.5,-2.5 -2.8,1 -0.3,-2.9 -2.9,-0.4 1,-2.8 -2.5,-1.6 2.5,-1.6 -1,-2.8 2.9,-0.4 0.3,-2.9 2.8,1 z"/></g>
</g>
<rect x="787.5" y="93.5" width="2.2" height="6" fill="#8a8a8a"/>
<rect x="795.5" y="101.5" width="2.2" height="6" fill="#8a8a8a"/>
<!-- download purple -->
<rect x="838" y="89" width="28.5" height="28" rx="2.5" fill="url(#purp)"/>
<rect x="850" y="92" width="3" height="15" fill="#fff"/>
<path d="M842.5,105.5 L849.5,107.5 L853.5,107.5 L860.5,105.5 L851.5,114.5 Z" fill="#fff"/>
<!-- tab: file benchmark -->
<path d="M60.5,146.8 H76.5 L80.8,151 V169.2 H60.5 Z" fill="#e6e6e6" stroke="#111" stroke-width="1.7"/>
<path d="M76,147.3 V151.5 H80.3" fill="#fff" stroke="#111" stroke-width="1"/>
<path d="M70.5,149.8 Q75.2,149.8 75.2,155 Q75.2,159 72,163.2 H69.2 Q66,159 66,155 Q66,149.8 70.5,149.8 Z" fill="#e018e0" stroke="#2a0a2a" stroke-width="1.3"/>
<ellipse cx="70.7" cy="167" rx="3.2" ry="2" fill="#c010c0" stroke="#111" stroke-width="1"/>
<!-- tab: benchmark yellow ! -->
<path d="M61.5,177 Q61.5,173.3 66,173.3 Q70.5,173.3 70.5,177 V182 Q70,184 68.8,185.5 V188.2 H63.2 V185.5 Q62,184 61.5,182 Z" fill="#dcdc00" stroke="#111" stroke-width="1.6"/>
<ellipse cx="66.3" cy="194" rx="3.4" ry="2.6" fill="#c8c800" stroke="#111" stroke-width="1.4"/>
<rect x="63.3" y="176" width="1.5" height="6" fill="#ffff90"/>
<!-- tab: disk monitor -->
<rect x="279.5" y="147" width="22" height="22" fill="#fffad0" stroke="#111" stroke-width="2"/>
<rect x="280.5" y="156" width="3" height="12" fill="#00e800"/>
<rect x="283.5" y="161" width="3" height="7" fill="#4040ff"/>
<rect x="286.5" y="162.5" width="2.5" height="5.5" fill="#00e800"/>
<rect x="289" y="155" width="2" height="13" fill="#4040ff"/>
<rect x="291" y="156" width="4" height="12" fill="#00e800"/>
<rect x="295" y="159.5" width="3" height="8.5" fill="#4040ff"/>
<rect x="298" y="161" width="2.5" height="7" fill="#00e800"/>
<!-- tab: AAM speaker -->
<path d="M477.5,154.5 Q477.5,153 479,153 H482 L490,147 Q492.5,145.8 493,148 V165.5 Q492.5,167.8 490,166.5 L482,160.5 H479 Q477.5,160.5 477.5,159 Z" fill="#f2ea00" stroke="#111" stroke-width="2"/>
<rect x="481" y="153.5" width="1.5" height="7" fill="#222"/>
<rect x="487" y="149.5" width="1.2" height="15" fill="#555" opacity="0.6"/>
<rect x="484" y="155" width="2" height="5" fill="#ffffa0" opacity="0.8"/>
<path d="M495.5,152.5 Q498,157 495.5,161.5" fill="none" stroke="#222" stroke-width="1.6"/>
<path d="M498,150 Q502,157 498,164" fill="none" stroke="#222" stroke-width="1.8"/>
<!-- tab: random access -->
<rect x="620" y="147" width="22" height="22" fill="url(#ylw)" stroke="#111" stroke-width="2"/>
<g fill="#4040f0"><circle cx="636" cy="152.6" r="1.1"/><circle cx="633" cy="154.2" r="1.1"/><circle cx="636" cy="155.8" r="1.1"/><circle cx="624.2" cy="157.2" r="1.1"/><circle cx="630.2" cy="157.2" r="1.1"/><circle cx="622.8" cy="160" r="1.1"/><circle cx="627.2" cy="161.5" r="1.1"/></g>
<g fill="#f04040"><circle cx="630.2" cy="160.2" r="1.1"/><circle cx="636" cy="160.2" r="1.1"/><circle cx="624.2" cy="161.5" r="1.1"/><circle cx="633" cy="163.2" r="1.1"/><circle cx="637.8" cy="163.2" r="1.1"/><circle cx="624.2" cy="164.5" r="1.1"/><circle cx="630.2" cy="164.5" r="1.1"/><circle cx="622.5" cy="167.5" r="1.1"/></g>
<!-- tab: extra tests -->
<rect x="842" y="147" width="22" height="22" fill="url(#ylw)" stroke="#111" stroke-width="2"/>
<rect x="843" y="156" width="3.2" height="12" fill="#00e800"/>
<rect x="846.2" y="161" width="2.5" height="7" fill="#4040ff"/>
<rect x="848.7" y="162" width="1.8" height="6" fill="#00e800"/>
<rect x="850.5" y="155.5" width="13" height="13" fill="#f4f4f4" stroke="#111" stroke-width="1.5"/>
<rect x="851.2" y="156.2" width="11.8" height="2.6" fill="#0000c0"/>
<g fill="#f03030"><circle cx="853.7" cy="160.6" r="1"/><circle cx="859.7" cy="160.6" r="1"/><circle cx="856.7" cy="163.3" r="1"/><circle cx="859.7" cy="163.3" r="1"/><circle cx="853.7" cy="166" r="1"/><circle cx="856.7" cy="166" r="1"/></g>
<g fill="#3030f0"><circle cx="856.7" cy="160.6" r="1"/><circle cx="859.7" cy="166" r="1"/></g>
<circle cx="853.7" cy="163.3" r="1" fill="#30c030"/>
<!-- tab: info -->
<rect x="244.5" y="176.5" width="8.5" height="6.5" rx="2" fill="#20c0f0" stroke="#111" stroke-width="1.6"/>
<path d="M243,185 H252.5 V198 H253.5 V199.5 H241.5 V198 Q243.5,197 244.5,196 V187 H243 Z" fill="#1060f0" stroke="#111" stroke-width="1.6"/>
<!-- tab: health cross -->
<path d="M373.5,177 H381.5 V184.5 H389 V192 H381.5 V199 H373.5 V192 H366.5 V184.5 H373.5 Z" fill="#e02828" stroke="#111" stroke-width="1.8"/>
<!-- tab: error scan -->
<path d="M524,187 L534.5,197.5" stroke="#111" stroke-width="6" stroke-linecap="round"/>
<path d="M524,187 L534.5,197.5" stroke="#0000d0" stroke-width="3.6" stroke-linecap="round"/>
<path d="M516.5,176.5 H523.5 L528.5,181 V186 L523.5,190.5 H516.5 L512.5,186 V181 Z" fill="#30d840" stroke="#111" stroke-width="1.6"/>
<path d="M518,180.5 L520,179 M522,185.5 L525,183" stroke="#c0ffc0" stroke-width="1"/>
<!-- tab: folder -->
<path d="M692,180 Q692,177 694,176.5 H698.5 L701,179.5 H709.5 V183 H692 Z" fill="#f0e050" stroke="#111" stroke-width="1.6"/>
<path d="M692,180 V198.5 H695 V183 Z" fill="#e8c820" stroke="#111" stroke-width="1.6"/>
<rect x="695" y="182.5" width="17.5" height="16.5" fill="url(#fold)" stroke="#111" stroke-width="1.6"/>
<rect x="696.5" y="184" width="1" height="14" fill="#fff8b0"/>
<rect x="709.5" y="184" width="1" height="14" fill="#a09070"/>
<!-- tab: erase -->
<path d="M891,177.5 H896 V179 H903 V182 H883.5 V179 H891 Z" fill="#777" stroke="#111" stroke-width="1.6"/>
<rect x="885" y="182" width="17" height="17" fill="url(#can)" stroke="#111" stroke-width="1.6"/>
<!-- checkmarks -->
<path d="M706.5,389.5 L710.5,393.5 L719,385" fill="none" stroke="#555" stroke-width="2"/>
<path d="M706.5,546.5 L710.5,550.5 L719,542" fill="none" stroke="#555" stroke-width="2"/>
<path d="M706.5,590.5 L710.5,594.5 L719,586" fill="none" stroke="#555" stroke-width="2"/>
<!-- spinner arrows -->
<path d="M778,354 L782,350 L786,354 Z" fill="#888"/>
<path d="M778,360 L782,364 L786,360 Z" fill="#888"/>
<!-- passes spin -->
<path d="M804,709 L808,704.5 L812,709 Z" fill="#111"/>
<path d="M707,710 L710,707 V712 Z" fill="#111"/>
</svg>
<!-- /ICONS -->
</body></html>
